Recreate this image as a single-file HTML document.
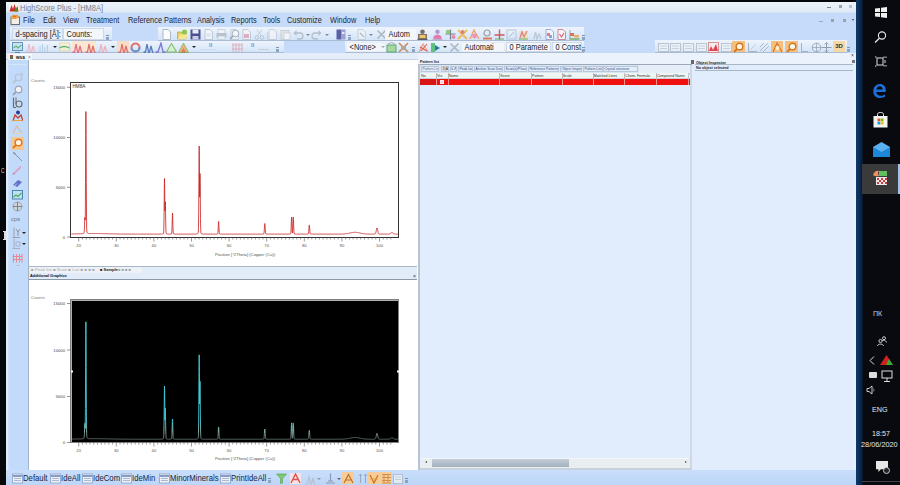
<!DOCTYPE html>
<html><head><meta charset="utf-8">
<style>
*{margin:0;padding:0;box-sizing:border-box}
html,body{width:900px;height:485px;overflow:hidden;background:#05070a;font-family:"Liberation Sans",sans-serif}
.a{position:absolute}
.t{position:absolute;white-space:nowrap;transform-origin:0 0}
.mn{position:absolute;top:16px;font-size:8.2px;color:#1b2636;transform:scaleX(.9);transform-origin:0 0;white-space:nowrap}
.tb{position:absolute;background:linear-gradient(#eef4fd,#d3e4f8);border-bottom:1px solid #a9bcd4}
.box{position:absolute;background:#f3f7fc;border:1px solid #cdd9e7;font-size:8.6px;color:#222;line-height:10px;white-space:nowrap;overflow:hidden}
.box span{display:inline-block;transform:scaleX(.86);transform-origin:0 0;padding-left:3px}
#wrap{position:absolute;left:0;top:0;width:900px;height:485px}
</style></head><body><div id="wrap">
<!-- window background -->
<div class="a" style="left:6px;top:2px;width:850px;height:483px;background:#c5dbf9"></div>
<!-- title bar -->
<div class="a" style="left:6px;top:2px;width:850px;height:11px;background:linear-gradient(#edf3fb,#e0eaf6);border-bottom:1px solid #d2e2f4"></div>
<svg class="a" style="left:9px;top:3px" width="10" height="9" viewBox="0 0 10 9"><rect x="0" y="0" width="10" height="9" fill="#f4f0ee"/><path d="M0.5 8.5 L2.5 2 L4 6 L5.5 1 L7 6 L8.5 3 L9.5 8.5Z" fill="#c83030"/><path d="M5 8.5 L7 4 L9.5 8.5Z" fill="#50902a"/></svg>
<div class="t" style="left:20px;top:3px;font-size:9px;line-height:11px;color:#76818f;transform:scaleX(.83)">HighScore Plus - [HM8A]</div>
<div class="a" style="left:827px;top:7px;width:4px;height:1px;background:#7c8796"></div>
<div class="a" style="left:839px;top:5px;width:3px;height:3px;background:#9aa4b0"></div>
<div class="a" style="left:849px;top:5px;width:3px;height:3px;background:#b8c2cc"></div>
<!-- menu bar -->
<svg class="a" style="left:10px;top:14px" width="10" height="11" viewBox="0 0 10 11"><rect x="1" y="3" width="8.5" height="7.5" fill="#f4efe6" stroke="#6a6050" stroke-width=".9"/><path d="M0.5 4 Q2 0 5 1 Q8 0 9 3 L6 5 L2 5Z" fill="#f0a040"/><path d="M3 2 L6 2.5" stroke="#c06020" stroke-width=".8"/></svg>
<div class="mn" style="left:23px">File</div><div class="mn" style="left:43px">Edit</div><div class="mn" style="left:63px">View</div>
<div class="mn" style="left:86px">Treatment</div><div class="mn" style="left:128px">Reference Patterns</div>
<div class="mn" style="left:197px">Analysis</div><div class="mn" style="left:231px">Reports</div><div class="mn" style="left:263px">Tools</div>
<div class="mn" style="left:287px">Customize</div><div class="mn" style="left:330px">Window</div><div class="mn" style="left:365px">Help</div>
<div class="a" style="left:819px;top:21px;width:4px;height:1px;background:#a0aab6"></div>
<div class="a" style="left:831px;top:19px;width:3px;height:3px;background:#98a2ae"></div>
<div class="a" style="left:843px;top:19px;width:3px;height:3px;background:#98a2ae"></div>
<div class="a" style="left:852px;top:19px;width:0;height:0;border-left:1.5px solid transparent;border-right:1.5px solid transparent;border-top:2px solid #445"></div>

<!-- toolbar row 1 -->
<div class="tb" style="left:10px;top:27px;width:102px;height:14px"></div>
<div class="box" style="left:12px;top:28px;width:51px;height:12px;background:#e6eef8"><span>d-spacing [Å]:</span></div>
<div class="box" style="left:63px;top:28px;width:41px;height:12px"><span>Counts:</span></div>
<div class="tb" style="left:158px;top:27px;width:426px;height:14px"></div>
<svg class="a" style="left:161px;top:29px" width="11" height="11" viewBox="0 0 11 11"><path d="M2 0.5 H7 L9.5 3 V10.5 H2Z" fill="#fdfdfd" stroke="#a8b2be" stroke-width="0.9"/></svg>
<svg class="a" style="left:177px;top:29px" width="11" height="11" viewBox="0 0 11 11"><path d="M0.5 3 H4 L5 4 H9 V10 H0.5Z" fill="#e8d060" stroke="#b09a30" stroke-width=".6"/><circle cx="7.5" cy="3" r="2.6" fill="#8cc850"/><path d="M1 10 L3 5.5 H10.5 L9 10Z" fill="#f4e890"/></svg>
<svg class="a" style="left:190px;top:29px" width="11" height="11" viewBox="0 0 11 11"><rect x="0.5" y="0.5" width="10" height="10" fill="#4a4f90"/><rect x="2.5" y="0.5" width="6" height="4" fill="#e8eaf6"/><rect x="2.5" y="7" width="6" height="3.5" fill="#c8cce6"/></svg>
<svg class="a" style="left:203px;top:29px;opacity:0.8" width="11" height="11" viewBox="0 0 11 11"><path d="M2 0.5 H7 L9.5 3 V10.5 H2Z" fill="#f6f8fa" stroke="#b0bac6" stroke-width="0.9"/><path d="M3.5 5 H8 M3.5 7 H8" stroke="#c0c8d0" stroke-width=".7"/></svg>
<svg class="a" style="left:216px;top:29px;opacity:0.7" width="11" height="11" viewBox="0 0 11 11"><rect x="2" y="0.5" width="7" height="4" fill="#f4f6f8" stroke="#b0b8c2" stroke-width=".7"/><rect x="0.5" y="4" width="10" height="4.5" fill="#a8b0ba"/><rect x="2" y="7" width="7" height="3.5" fill="#f0f2f4" stroke="#b0b8c2" stroke-width=".6"/></svg>
<svg class="a" style="left:229px;top:29px;opacity:0.7" width="11" height="11" viewBox="0 0 11 11"><path d="M2 0.5 H7 L9.5 3 V10.5 H2Z" fill="#f2f4f6" stroke="#b0bac6" stroke-width="0.9"/><circle cx="6.5" cy="4.5" r="3.3" fill="#ffffffaa" stroke="#8a96a4" stroke-width="1"/><path d="M4 7 L1 10" stroke="#8a96a4" stroke-width="1.8"/></svg>
<svg class="a" style="left:241px;top:29px;opacity:0.8" width="11" height="11" viewBox="0 0 11 11"><path d="M2 0.5 H7 L9.5 3 V10.5 H2Z" fill="#f4f4f6" stroke="#b4bcc6" stroke-width="0.9"/><rect x="3" y="5" width="5" height="4" fill="#e0a0b0"/></svg>
<svg class="a" style="left:254px;top:29px;opacity:0.7" width="11" height="11" viewBox="0 0 11 11"><circle cx="3" cy="8.5" r="1.8" fill="none" stroke="#a8b2be" stroke-width=".9"/><circle cx="8" cy="8.5" r="1.8" fill="none" stroke="#a8b2be" stroke-width=".9"/><path d="M3.5 7 L8 0.5 M7.5 7 L3 0.5" stroke="#b4bcc6" stroke-width=".9"/></svg>
<svg class="a" style="left:267px;top:29px;opacity:0.7" width="11" height="11" viewBox="0 0 11 11"><path d="M2 0.5 H7 L9.5 3 V10.5 H2Z" fill="#f4f6f8" stroke="#b8c0ca" stroke-width="0.9"/><path d="M0.5 3 V10.5 H6" fill="none" stroke="#b8c0ca" stroke-width=".8"/></svg>
<svg class="a" style="left:280px;top:29px;opacity:0.7" width="11" height="11" viewBox="0 0 11 11"><rect x="1" y="1.5" width="8" height="9" fill="#e4e0d4" stroke="#b8bcc4" stroke-width=".8"/><rect x="4" y="4" width="6" height="6.5" fill="#fafafa" stroke="#b8c0ca" stroke-width=".7"/></svg>
<svg class="a" style="left:293px;top:29px;opacity:0.8" width="11" height="11" viewBox="0 0 11 11"><path d="M2 4 H7 Q10 4 10 7 Q10 10 7 10 H4" fill="none" stroke="#aab4c0" stroke-width="1.3"/><path d="M0.5 4 L3.5 1 V7Z" fill="#aab4c0"/></svg>
<svg class="a" style="left:311px;top:29px;opacity:0.8" width="11" height="11" viewBox="0 0 11 11"><path d="M9 4 H4 Q1 4 1 7 Q1 10 4 10 H7" fill="none" stroke="#aab4c0" stroke-width="1.3"/><path d="M10.5 4 L7.5 1 V7Z" fill="#aab4c0"/></svg>
<svg class="a" style="left:336px;top:29px" width="11" height="11" viewBox="0 0 11 11"><rect x="0.5" y="0.5" width="5" height="10" fill="#5a60a8"/><rect x="5" y="0.5" width="4.5" height="10" fill="#9aa0d0"/><rect x="6" y="3" width="2.5" height="2" fill="#e8e8f8"/></svg>
<svg class="a" style="left:356px;top:29px;opacity:0.7" width="11" height="11" viewBox="0 0 11 11"><path d="M2 0.5 H7 L9.5 3 V10.5 H2Z" fill="#eef2f6" stroke="#b8c0ca" stroke-width="0.9"/><path d="M4 4 L8 8" stroke="#9ab0a0" stroke-width="1.2"/></svg>
<svg class="a" style="left:376px;top:29px;opacity:0.9" width="11" height="11" viewBox="0 0 11 11"><path d="M1.5 1.5 L9.5 9.5 M9.5 1.5 L1.5 9.5" stroke="#a8b0ba" stroke-width="1.5"/></svg>
<svg class="a" style="left:417px;top:29px;opacity:0.78" width="11" height="11" viewBox="0 0 11 11"><circle cx="5.5" cy="2.8" r="2.3" fill="#5a4a40"/><rect x="1" y="5" width="9" height="5.5" fill="#6a5040"/><rect x="2.5" y="6" width="6" height="3" fill="#f0c040"/><path d="M0.5 10.5 H10.5" stroke="#3a3a3a" stroke-width="1"/></svg>
<svg class="a" style="left:432px;top:29px;opacity:0.78" width="11" height="11" viewBox="0 0 11 11"><circle cx="5.5" cy="2.8" r="2.2" fill="#a080c0"/><path d="M1.5 10.5 V7.5 Q5.5 3.5 9.5 7.5 V10.5Z" fill="#e060a0"/><path d="M0.5 10.5 H10.5" stroke="#c0a0c0" stroke-width="1.2"/></svg>
<svg class="a" style="left:445px;top:29px;opacity:0.78" width="11" height="11" viewBox="0 0 11 11"><path d="M5.5 0.5 V10.5 M0.5 5 H10.5" stroke="#606060" stroke-width="1.2"/><circle cx="3" cy="3" r="2.2" fill="#70c060"/><circle cx="8.5" cy="8" r="2" fill="#e070a0"/></svg>
<svg class="a" style="left:457px;top:29px;opacity:0.78" width="11" height="11" viewBox="0 0 11 11"><path d="M1 1 L10 10 M10 1 L1 10" stroke="#f0b030" stroke-width="1.8"/><circle cx="5.5" cy="3" r="2" fill="#e06060"/></svg>
<svg class="a" style="left:469px;top:29px;opacity:0.78" width="11" height="11" viewBox="0 0 11 11"><path d="M1 10 L5 1 L10 10" fill="none" stroke="#f09050" stroke-width="1.4"/><circle cx="5.5" cy="7" r="2.4" fill="#f080a0"/></svg>
<svg class="a" style="left:482px;top:29px;opacity:0.78" width="11" height="11" viewBox="0 0 11 11"><circle cx="5" cy="4" r="3" fill="none" stroke="#888" stroke-width="1.2"/><path d="M1 9.5 H10" stroke="#e06030" stroke-width="2"/></svg>
<svg class="a" style="left:494px;top:29px;opacity:0.78" width="11" height="11" viewBox="0 0 11 11"><path d="M5.5 0.5 V10.5 M0.5 6 H10.5" stroke="#d03030" stroke-width="1.4"/><path d="M1 10 L10 10" stroke="#40a040" stroke-width="1"/></svg>
<svg class="a" style="left:506px;top:29px;opacity:0.8" width="11" height="11" viewBox="0 0 11 11"><rect x="1" y="1" width="9" height="9" fill="none" stroke="#b0bccc" stroke-width="1"/><path d="M3 8 L8 3" stroke="#a0b0c8" stroke-width="1"/></svg>
<svg class="a" style="left:518px;top:29px;opacity:0.78" width="11" height="11" viewBox="0 0 11 11"><rect x="1" y="2" width="9" height="8.5" fill="#f4e4a0"/><path d="M2 9 L4 3 L6 8 L9 2" fill="none" stroke="#e06080" stroke-width="1.3"/><path d="M1 10 H10" stroke="#60b050" stroke-width="1.2"/></svg>
<svg class="a" style="left:532px;top:29px;opacity:0.7" width="11" height="11" viewBox="0 0 11 11"><path d="M2 10 L3.5 3 L5 10 L7 5 L9 10" fill="none" stroke="#b0b8c4" stroke-width="1.2"/></svg>
<svg class="a" style="left:544px;top:29px;opacity:0.78" width="11" height="11" viewBox="0 0 11 11"><path d="M2 0.5 H7 L9.5 3 V10.5 H2Z" fill="#f4f6fc" stroke="#8890c8" stroke-width="0.9"/><rect x="3" y="4" width="3" height="3" fill="#e06060"/><rect x="5" y="6" width="3" height="3" fill="#7090d0"/></svg>
<svg class="a" style="left:556px;top:29px;opacity:0.78" width="11" height="11" viewBox="0 0 11 11"><path d="M2 0.5 H7 L9.5 3 V10.5 H2Z" fill="#fcf4f6" stroke="#c06070" stroke-width="0.9"/><path d="M3.5 5 L5.5 8 L8 4" fill="none" stroke="#d04050" stroke-width="1.2"/></svg>
<svg class="a" style="left:569px;top:29px;opacity:0.78" width="11" height="11" viewBox="0 0 11 11"><rect x="1" y="4" width="4" height="3" fill="#e05030"/><rect x="5" y="6" width="5" height="2.5" fill="#f0a040"/><path d="M0.5 10 H10.5" stroke="#60a040" stroke-width="1.5"/><path d="M1 1 V10" stroke="#777" stroke-width=".8"/></svg>
<div class="a" style="left:306px;top:34px;width:0;height:0;border-left:2px solid transparent;border-right:2px solid transparent;border-top:2px solid #7a8796"></div>
<div class="a" style="left:325px;top:34px;width:0;height:0;border-left:2px solid transparent;border-right:2px solid transparent;border-top:2px solid #7a8796"></div>
<div class="a" style="left:369px;top:34px;width:0;height:0;border-left:2px solid transparent;border-right:2px solid transparent;border-top:2px solid #7a8796"></div>
<div class="a" style="left:106px;top:35px;width:3px;height:1px;background:#7d93ae;"></div><div class="a" style="left:106px;top:37px;width:3px;height:3px;background:#8ea5c2;"></div>
<div class="a" style="left:348px;top:35px;width:3px;height:1px;background:#7d93ae;"></div><div class="a" style="left:348px;top:37px;width:3px;height:3px;background:#8ea5c2;"></div>
<div class="a" style="left:582px;top:35px;width:3px;height:1px;background:#7d93ae;"></div><div class="a" style="left:582px;top:37px;width:3px;height:3px;background:#8ea5c2;"></div>
<div class="box" style="left:385px;top:28px;width:32px;height:12px;border-color:#eef3f9"><span>Autom</span></div>
<div class="tb" style="left:10px;top:41px;width:274px;height:12px"></div>
<svg class="a" style="left:12px;top:42px;opacity:0.75" width="11" height="11" viewBox="0 0 11 11"><rect x="0.5" y="0.5" width="10" height="8" fill="#bfe0f0" stroke="#3a78a8" stroke-width="1"/><path d="M1.5 6 L4 4 L6 6 L9.5 3" fill="none" stroke="#40a050" stroke-width="1.2"/><path d="M3 10.5 H8" stroke="#3a78a8" stroke-width="1.2"/></svg>
<svg class="a" style="left:25px;top:42px;opacity:0.9" width="11" height="11" viewBox="0 0 11 11"><path d="M0.5 10 L2.5 10 L4 2 L5.5 10 L6.5 10 L8 4 L9.5 10 L10.5 10" fill="none" stroke="#f4b0c4" stroke-width="1.1"/></svg>
<svg class="a" style="left:38px;top:42px;opacity:0.75" width="11" height="11" viewBox="0 0 11 11"><path d="M2 10 V4 M4.5 10 V2 M7 10 V5 M9.5 10 V3" stroke="#a8c4e4" stroke-width="1"/></svg>
<div class="a" style="left:53px;top:46px;width:0;height:0;border-left:2px solid transparent;border-right:2px solid transparent;border-top:2px solid #222"></div>
<svg class="a" style="left:59px;top:42px;opacity:0.75" width="11" height="11" viewBox="0 0 11 11"><rect x="0.5" y="1" width="10" height="8" fill="#f8f0c8" stroke="#e0c860" stroke-width=".6"/><path d="M0.5 6 Q5 3 10.5 6" fill="none" stroke="#40a050" stroke-width="1.4"/></svg>
<div class="a" style="left:72px;top:41px;width:12px;height:11px;background:#fbe6d2;"></div>
<svg class="a" style="left:72px;top:42px;opacity:0.75" width="11" height="11" viewBox="0 0 11 11"><path d="M0.5 10 L2.5 10 L4 2 L5.5 10 L6.5 10 L8 4 L9.5 10 L10.5 10" fill="none" stroke="#e04870" stroke-width="1.3"/></svg>
<div class="a" style="left:84px;top:41px;width:12px;height:11px;background:#fbe6d2;"></div>
<svg class="a" style="left:85px;top:42px;opacity:0.75" width="11" height="11" viewBox="0 0 11 11"><path d="M0.5 10 L2.5 10 L4 2 L5.5 10 L6.5 10 L8 4 L9.5 10 L10.5 10" fill="none" stroke="#d84848" stroke-width="1.3"/></svg>
<svg class="a" style="left:97px;top:42px;opacity:0.75" width="11" height="11" viewBox="0 0 11 11"><path d="M0.5 10 L2.5 10 L4 2 L5.5 10 L6.5 10 L8 4 L9.5 10 L10.5 10" fill="none" stroke="#f0a0a8" stroke-width="1.2"/></svg>
<div class="a" style="left:111px;top:46px;width:0;height:0;border-left:2px solid transparent;border-right:2px solid transparent;border-top:2px solid #222"></div>
<div class="a" style="left:117px;top:41px;width:12px;height:11px;background:#f9dcc4;"></div>
<svg class="a" style="left:118px;top:42px;opacity:0.75" width="11" height="11" viewBox="0 0 11 11"><path d="M0.5 10 L2.5 10 L4 2 L5.5 10 L6.5 10 L8 4 L9.5 10 L10.5 10" fill="none" stroke="#d85050" stroke-width="1.3"/></svg>
<svg class="a" style="left:130px;top:42px;opacity:0.75" width="11" height="11" viewBox="0 0 11 11"><circle cx="5.5" cy="5.5" r="4" fill="none" stroke="#e04848" stroke-width="2"/><path d="M1.5 5.5 A4 4 0 0 0 9.5 5.5" fill="none" stroke="#3a80c0" stroke-width="2"/></svg>
<svg class="a" style="left:143px;top:42px;opacity:0.75" width="11" height="11" viewBox="0 0 11 11"><path d="M0.5 10 L2.5 10 L4 2 L5.5 10 L6.5 10 L8 4 L9.5 10 L10.5 10" fill="none" stroke="#2a5ab0" stroke-width="1.3"/></svg>
<svg class="a" style="left:155px;top:42px;opacity:0.75" width="11" height="11" viewBox="0 0 11 11"><path d="M0.5 10 L3 10 L6 1 L8 10 L10.5 10" fill="none" stroke="#5a50c0" stroke-width="1.3"/></svg>
<svg class="a" style="left:166px;top:42px;opacity:0.75" width="11" height="11" viewBox="0 0 11 11"><path d="M0.5 10 L5.5 1.5 L10.5 10Z" fill="#d8f0c0" stroke="#60b040" stroke-width="1.1"/></svg>
<svg class="a" style="left:178px;top:42px;opacity:0.75" width="11" height="11" viewBox="0 0 11 11"><path d="M0.5 10.5 L5.5 1 L10.5 10.5Z" fill="#f0a050" stroke="#60a040" stroke-width=".8"/><path d="M3 10.5 L5.5 6 L8 10.5Z" fill="#d06020"/></svg>
<div class="a" style="left:192px;top:46px;width:0;height:0;border-left:2px solid transparent;border-right:2px solid transparent;border-top:2px solid #222"></div>
<div class="t" style="left:209px;top:42px;font-size:6px;color:#667">II</div>
<div class="t" style="left:200px;top:45px;font-size:6px;color:#8a96a6;letter-spacing:1px">......</div>
<svg class="a" style="left:232px;top:42px;opacity:0.9" width="11" height="11" viewBox="0 0 11 11"><path d="M1 1 V10 M4 1 V10 M7 1 V10 M10 1 V10 M0.5 3 H10.5 M0.5 7 H10.5" stroke="#e0a0b0" stroke-width=".9"/></svg>
<div class="t" style="left:251px;top:42px;font-size:6px;color:#667">II</div>
<div class="t" style="left:258px;top:45px;font-size:6px;color:#556;letter-spacing:.5px">.....</div>
<div class="a" style="left:276px;top:47px;width:3px;height:1px;background:#7d93ae;"></div><div class="a" style="left:276px;top:49px;width:3px;height:3px;background:#8ea5c2;"></div>
<div class="tb" style="left:345px;top:41px;width:239px;height:12px"></div>
<div class="box" style="left:346px;top:42px;width:40px;height:10px;line-height:9px;border-color:#e6edf6"><span>&lt;None&gt;</span></div>
<div class="a" style="left:381px;top:46px;width:0;height:0;border-left:2px solid transparent;border-right:2px solid transparent;border-top:2px solid #aaa"></div>
<svg class="a" style="left:386px;top:42px" width="11" height="11" viewBox="0 0 11 11"><rect x="1" y="3" width="9" height="7" fill="#a8d8a0" stroke="#40a060" stroke-width=".8"/><path d="M2 2 Q5.5 -1 9 2" fill="none" stroke="#a0a8b0" stroke-width="1"/></svg>
<svg class="a" style="left:398px;top:42px;opacity:0.9" width="11" height="11" viewBox="0 0 11 11"><path d="M1 1 L10 10 M10 1 L1 10" stroke="#d08040" stroke-width="1.6"/><rect x="3" y="4" width="5" height="4" fill="#b0a090"/></svg>
<div class="a" style="left:412px;top:47px;width:3px;height:1px;background:#7d93ae;"></div><div class="a" style="left:412px;top:49px;width:3px;height:3px;background:#8ea5c2;"></div>
<svg class="a" style="left:418px;top:42px" width="11" height="11" viewBox="0 0 11 11"><path d="M1 10 L5 2 L10 10" fill="none" stroke="#f0a090" stroke-width="1.3"/><path d="M2 5 L9 9 M9 2 L3 9" stroke="#e06040" stroke-width="1.1"/></svg>
<svg class="a" style="left:430px;top:42px" width="11" height="11" viewBox="0 0 11 11"><rect x="1" y="1" width="4" height="9" fill="#60c080"/><path d="M5 3 L10 6 L5 9Z" fill="#2080a0"/></svg>
<div class="a" style="left:443px;top:46px;width:0;height:0;border-left:2px solid transparent;border-right:2px solid transparent;border-top:2px solid #222"></div>
<svg class="a" style="left:449px;top:42px" width="11" height="11" viewBox="0 0 11 11"><path d="M1.5 1.5 L9.5 9.5 M9.5 1.5 L1.5 9.5" stroke="#aeb6c0" stroke-width="1.6"/></svg>
<div class="box" style="left:461px;top:42px;width:44px;height:10px;line-height:9px;border-color:#e9eef5"><span>Automati</span></div>
<div class="box" style="left:506px;top:42px;width:45px;height:10px;line-height:9px"><span>0 Paramete</span></div>
<div class="box" style="left:552px;top:42px;width:30px;height:10px;line-height:9px"><span>0 Constr</span></div>
<div class="a" style="left:582px;top:47px;width:3px;height:1px;background:#7d93ae;"></div><div class="a" style="left:582px;top:49px;width:3px;height:3px;background:#8ea5c2;"></div>
<div class="tb" style="left:655px;top:40px;width:192px;height:13px"></div>
<svg class="a" style="left:658px;top:42px;opacity:0.75" width="11" height="11" viewBox="0 0 11 11"><rect x="0.5" y="1.5" width="10" height="8" fill="#eef2f6" stroke="#a8b2bc" stroke-width=".9"/><path d="M2 4 H9 M2 6.5 H9" stroke="#b8c0ca" stroke-width=".8"/></svg>
<svg class="a" style="left:670px;top:42px;opacity:0.75" width="11" height="11" viewBox="0 0 11 11"><rect x="0.5" y="1.5" width="10" height="8" fill="#eef2f6" stroke="#a8b2bc" stroke-width=".9"/><path d="M2 4 H9 M2 6.5 H9" stroke="#b8c0ca" stroke-width=".8"/></svg>
<svg class="a" style="left:683px;top:42px;opacity:0.75" width="11" height="11" viewBox="0 0 11 11"><rect x="0.5" y="1.5" width="10" height="8" fill="#eef2f6" stroke="#a8b2bc" stroke-width=".9"/><path d="M2 4 H9 M2 6.5 H9" stroke="#b8c0ca" stroke-width=".8"/></svg>
<svg class="a" style="left:696px;top:42px;opacity:0.75" width="11" height="11" viewBox="0 0 11 11"><rect x="0.5" y="1.5" width="10" height="8" fill="#eef2f6" stroke="#a8b2bc" stroke-width=".9"/><path d="M2 4 H9 M2 6.5 H9" stroke="#b8c0ca" stroke-width=".8"/></svg>
<svg class="a" style="left:721px;top:42px;opacity:0.75" width="11" height="11" viewBox="0 0 11 11"><rect x="0.5" y="1.5" width="10" height="8" fill="#eef2f6" stroke="#a8b2bc" stroke-width=".9"/><path d="M2 4 H9 M2 6.5 H9" stroke="#b8c0ca" stroke-width=".8"/></svg>
<svg class="a" style="left:708px;top:42px" width="11" height="11" viewBox="0 0 11 11"><rect x="0.5" y="0.5" width="10" height="10" fill="#f8ecec" stroke="#d08080" stroke-width=".8"/><path d="M1 9 L3 4 L5 8 L8 2 L10 9" fill="#e04050"/></svg>
<div class="a" style="left:732px;top:41px;width:13px;height:11px;background:#f4c080;"></div>
<svg class="a" style="left:733px;top:42px" width="11" height="11" viewBox="0 0 11 11"><circle cx="6.5" cy="4.5" r="3.3" fill="#f8f8e8" stroke="#d07820" stroke-width="1.4"/><path d="M4 7 L1 10" stroke="#d07820" stroke-width="1.8"/></svg>
<div class="a" style="left:771px;top:41px;width:12px;height:11px;background:#f4c080;"></div>
<svg class="a" style="left:772px;top:42px" width="11" height="11" viewBox="0 0 11 11"><path d="M1 10 L5 1 L10 10" fill="none" stroke="#e07020" stroke-width="1.2"/><circle cx="5.5" cy="6" r="2" fill="#fff4d0"/></svg>
<div class="a" style="left:785px;top:41px;width:13px;height:11px;background:#f4c080;"></div>
<svg class="a" style="left:786px;top:42px" width="11" height="11" viewBox="0 0 11 11"><circle cx="6.5" cy="4.5" r="3.3" fill="#f8f8e8" stroke="#d07820" stroke-width="1.4"/><path d="M4 7 L1 10" stroke="#d07820" stroke-width="1.8"/></svg>
<svg class="a" style="left:811px;top:42px" width="11" height="11" viewBox="0 0 11 11"><circle cx="5.5" cy="5.5" r="4.3" fill="none" stroke="#9aa6b2" stroke-width=".9"/><path d="M1 5.5 H10 M5.5 1 V10" stroke="#9aa6b2" stroke-width=".8"/></svg>
<svg class="a" style="left:821px;top:42px;opacity:0.9" width="11" height="11" viewBox="0 0 11 11"><path d="M5.5 0.5 V10.5 M0.5 5.5 H10.5" stroke="#8a96a4" stroke-width="1"/><path d="M3.5 2.5 L5.5 0.5 L7.5 2.5 M3.5 8.5 L5.5 10.5 L7.5 8.5" fill="none" stroke="#8a96a4" stroke-width=".8"/></svg>
<svg class="a" style="left:747px;top:42px" width="11" height="11" viewBox="0 0 11 11"><path d="M1.5 1 V9.5 H10" fill="none" stroke="#a8b2bc" stroke-width="1"/><path d="M3 8 L9 2" stroke="#c0c8d2" stroke-width=".8"/></svg>
<svg class="a" style="left:759px;top:42px" width="11" height="11" viewBox="0 0 11 11"><path d="M1 9 L9 1 M4 10 L10 4 M1 5 L5 1" stroke="#a8b2bc" stroke-width=".9"/></svg>
<svg class="a" style="left:800px;top:42px" width="11" height="11" viewBox="0 0 11 11"><path d="M1.5 1 V9.5 H8" fill="none" stroke="#a8b2bc" stroke-width="1"/></svg>
<div class="a" style="left:833px;top:41px;width:12px;height:11px;background:#f6d8a4;font-size:6px;font-weight:bold;color:#333;text-align:center;line-height:11px">3D</div>
<div class="a" style="left:847px;top:47px;width:3px;height:1px;background:#7d93ae;"></div><div class="a" style="left:847px;top:49px;width:3px;height:3px;background:#8ea5c2;"></div>

<!-- tab strip -->
<div class="a" style="left:6px;top:53px;width:412px;height:7px;background:#e4edf9;border-bottom:1px solid #c6d3e3"></div>
<div class="a" style="left:8px;top:54px;width:24px;height:7px;background:#eef4fc;border-top:1px solid #fff"></div>
<div class="a" style="left:10px;top:55px;width:3px;height:4px;background:linear-gradient(#d04040,#308040)"></div>
<div class="t" style="left:16px;top:54px;font-size:4.6px;line-height:7px;color:#111;font-weight:bold">wsa</div>
<div class="t" style="left:28px;top:54px;font-size:4.6px;line-height:7px;color:#888">×</div>

<!-- left toolbar -->
<div class="a" style="left:6px;top:60px;width:22px;height:410px;background:linear-gradient(90deg,#dbe9fb,#c3dbfa 20%,#c3dbfa)"></div>
<div class="a" style="left:28px;top:60px;width:1px;height:410px;background:#a4b4c6"></div>
<div class="a" style="left:6px;top:60px;width:2px;height:410px;background:#e0ecfa;"></div>
<div class="a" style="left:9px;top:64px;width:17px;height:1px;background:#d6e4f6;"></div>
<svg class="a" style="left:12px;top:73px;opacity:0.8" width="11" height="11" viewBox="0 0 11 11"><circle cx="6.5" cy="4.5" r="3.3" fill="none" stroke="#b4bec8" stroke-width="1.1"/><path d="M4 7 L1 10" stroke="#b4bec8" stroke-width="1.8"/><path d="M8 0.5 H10.5 V3" fill="none" stroke="#b4bec8" stroke-width=".8"/></svg>
<svg class="a" style="left:12px;top:85px" width="11" height="11" viewBox="0 0 11 11"><circle cx="6.5" cy="4.5" r="3.3" fill="#f0f4f8" stroke="#98a4b2" stroke-width="1.2"/><path d="M4 7 L1 10" stroke="#98a4b2" stroke-width="1.8"/></svg>
<svg class="a" style="left:12px;top:97px" width="11" height="11" viewBox="0 0 11 11"><path d="M1.5 0.5 V10.5 M1.5 10.5 H4" stroke="#666c76" stroke-width="1.2"/><circle cx="7" cy="7" r="3" fill="none" stroke="#6a6a6a" stroke-width="1.1"/><path d="M4 0.5 V7" stroke="#6a6a6a" stroke-width="1"/></svg>
<svg class="a" style="left:12px;top:110px" width="11" height="12" viewBox="0 0 11 12"><circle cx="6" cy="2.5" r="2" fill="#303a90"/><path d="M1 11 L3 5 L6 8 L9 5 L11 11" fill="none" stroke="#c04030" stroke-width="1.3"/><path d="M0.5 10.5 H10.5" stroke="#e8a040" stroke-width="1"/></svg>
<svg class="a" style="left:12px;top:123px;opacity:0.8" width="11" height="11" viewBox="0 0 11 11"><path d="M1 10 L5 3 L10 10" fill="none" stroke="#e8b090" stroke-width="1.2"/><path d="M2 10.5 H9" stroke="#f0d080" stroke-width="1"/></svg>
<div class="a" style="left:11px;top:137px;width:13px;height:13px;background:#f6c890;"></div>
<svg class="a" style="left:12px;top:138px" width="11" height="11" viewBox="0 0 11 11"><circle cx="6.5" cy="4.5" r="3.3" fill="#fff8e8" stroke="#e07820" stroke-width="1.5"/><path d="M4 7 L1 10" stroke="#e07820" stroke-width="1.8"/></svg>
<svg class="a" style="left:12px;top:151px" width="11" height="11" viewBox="0 0 11 11"><path d="M1 1 L10 10" stroke="#8a94a2" stroke-width="1"/><path d="M1 1 L4 2 L2 4Z" fill="#8a94a2"/></svg>
<svg class="a" style="left:12px;top:164px" width="11" height="11" viewBox="0 0 11 11"><path d="M1.5 10 L9 2.5" stroke="#d8a8d0" stroke-width="2.2"/><path d="M1 10.5 L2.5 9" stroke="#8a6a8a" stroke-width="1"/></svg>
<svg class="a" style="left:12px;top:177px" width="11" height="11" viewBox="0 0 11 11"><path d="M1 8 L6 3 L10 5 L5 10Z" fill="#6070c8"/><path d="M2 9.5 L5 6.5" stroke="#c0c8f0" stroke-width="1"/></svg>
<svg class="a" style="left:12px;top:190px" width="11" height="11" viewBox="0 0 11 11"><rect x="0.5" y="0.5" width="10" height="8.5" fill="#bfe0ec" stroke="#4a86b0" stroke-width="1"/><path d="M1.5 7 L4 5 L6 6.5 L9.5 3" fill="none" stroke="#50a860" stroke-width="1.2"/></svg>
<svg class="a" style="left:12px;top:201px" width="11" height="11" viewBox="0 0 11 11"><circle cx="5.5" cy="5.5" r="4.5" fill="#cdd3da" stroke="#98a2ae" stroke-width="1"/><path d="M1 5.5 H10 M5.5 1 V10" stroke="#7a8694" stroke-width="1"/></svg>
<div class="t" style="left:11px;top:216px;font-size:6px;color:#6a7a90">cps</div>
<svg class="a" style="left:12px;top:227px" width="11" height="11" viewBox="0 0 11 11"><path d="M2 0.5 V10.5 M0.5 10.5 H8" stroke="#9aa0a8" stroke-width="1"/><path d="M4 2 L6 5 L8 2 M6 5 V9" fill="none" stroke="#8a8a8a" stroke-width=".9"/></svg>
<svg class="a" style="left:12px;top:238px" width="11" height="11" viewBox="0 0 11 11"><path d="M2 0.5 V10.5 M0.5 10.5 H8" stroke="#a8aeb6" stroke-width="1"/><rect x="4" y="4" width="4" height="4" fill="none" stroke="#a8a8c8" stroke-width=".8"/></svg>
<div class="a" style="left:22px;top:232px;width:0;height:0;border-left:2px solid transparent;border-right:2px solid transparent;border-top:2px solid #222"></div>
<div class="a" style="left:22px;top:243px;width:0;height:0;border-left:2px solid transparent;border-right:2px solid transparent;border-top:2px solid #222"></div>
<svg class="a" style="left:12px;top:253px" width="11" height="10" viewBox="0 0 11 10"><path d="M1.5 1 V9.5 M4.5 1 V9.5 M7.5 1 V9.5 M10 1 V9.5 M0.5 3.5 H10.5 M0.5 6.5 H10.5" stroke="#e58a96" stroke-width="1"/></svg>
<div class="t" style="left:16px;top:261px;font-size:6px;color:#445">..</div>
<div class="t" style="left:1px;top:166px;font-size:8px;color:#ddd;transform:scaleX(.6)">C</div>
<div class="a" style="left:4px;top:231px;width:2px;height:9px;background:#ddd;"></div>
<div class="a" style="left:3px;top:231px;width:3px;height:1px;background:#ddd;"></div>
<div class="a" style="left:3px;top:239px;width:3px;height:1px;background:#ddd;"></div>
<!-- main white -->
<div class="a" style="left:29px;top:60px;width:389px;height:410px;background:#fff"></div>
<svg class="a" style="left:0;top:0" width="900" height="485" viewBox="0 0 900 485">
<rect x="70.5" y="82.5" width="328" height="155" fill="none" stroke="#333" stroke-width="1"/>
<path d="M71.50,233.96 L71.70,233.95 L71.90,233.95 L72.10,233.95 L72.30,233.94 L72.50,233.94 L72.70,233.94 L72.90,233.93 L73.10,233.93 L73.30,233.92 L73.50,233.92 L73.70,233.92 L73.90,233.91 L74.10,233.91 L74.30,233.90 L74.50,233.90 L74.70,233.90 L74.90,233.89 L75.10,233.89 L75.30,233.88 L75.50,233.88 L75.70,233.87 L75.90,233.87 L76.10,233.86 L76.30,233.86 L76.50,233.85 L76.70,233.85 L76.90,233.84 L77.10,233.84 L77.30,233.84 L77.50,233.83 L77.70,233.83 L77.90,233.82 L78.10,233.82 L78.30,233.81 L78.50,233.81 L78.70,233.80 L78.90,233.80 L79.10,233.79 L79.30,233.79 L79.50,233.78 L79.70,233.78 L79.90,233.77 L80.10,233.77 L80.30,233.76 L80.50,233.75 L80.70,233.75 L80.90,233.74 L81.10,233.74 L81.30,233.73 L81.50,233.72 L81.70,233.72 L81.90,233.71 L82.10,233.70 L82.30,233.68 L82.50,233.66 L82.70,233.64 L82.90,233.60 L83.10,233.56 L83.30,233.50 L83.50,233.43 L83.70,233.35 L83.90,233.25 L84.10,232.66 L84.30,230.43 L84.50,225.82 L84.70,220.19 L84.75,219.07 L84.90,217.50 L85.05,219.07 L85.10,220.18 L85.30,216.01 L85.50,182.66 L85.70,135.60 L85.75,125.73 L85.90,111.54 L86.05,125.72 L86.10,135.59 L86.30,182.64 L86.50,215.99 L86.70,228.97 L86.90,232.07 L87.10,232.63 L87.30,232.80 L87.50,232.93 L87.70,233.05 L87.90,233.16 L88.10,233.25 L88.30,233.33 L88.50,233.39 L88.70,233.44 L88.90,233.47 L89.10,233.50 L89.30,233.52 L89.50,233.53 L89.70,233.53 L89.90,233.54 L90.10,233.54 L90.30,233.54 L90.50,233.54 L90.70,233.54 L90.90,233.53 L91.10,233.53 L91.30,233.53 L91.50,233.53 L91.70,233.53 L91.90,233.52 L92.10,233.52 L92.30,233.52 L92.50,233.52 L92.70,233.52 L92.90,233.52 L93.10,233.52 L93.30,233.51 L93.50,233.51 L93.70,233.51 L93.90,233.51 L94.10,233.51 L94.30,233.51 L94.50,233.51 L94.70,233.51 L94.90,233.51 L95.10,233.51 L95.30,233.51 L95.50,233.51 L95.70,233.51 L95.90,233.51 L96.10,233.51 L96.30,233.51 L96.50,233.51 L96.70,233.51 L96.90,233.52 L97.10,233.52 L97.30,233.52 L97.50,233.52 L97.70,233.52 L97.90,233.52 L98.10,233.52 L98.30,233.53 L98.50,233.53 L98.70,233.53 L98.90,233.53 L99.10,233.54 L99.30,233.54 L99.50,233.54 L99.70,233.54 L99.90,233.55 L100.10,233.55 L100.30,233.55 L100.50,233.55 L100.70,233.56 L100.90,233.56 L101.10,233.56 L101.30,233.57 L101.50,233.57 L101.70,233.57 L101.90,233.58 L102.10,233.58 L102.30,233.59 L102.50,233.59 L102.70,233.59 L102.90,233.60 L103.10,233.60 L103.30,233.61 L103.50,233.61 L103.70,233.61 L103.90,233.62 L104.10,233.62 L104.30,233.63 L104.50,233.63 L104.70,233.64 L104.90,233.64 L105.10,233.65 L105.30,233.65 L105.50,233.65 L105.70,233.66 L105.90,233.66 L106.10,233.67 L106.30,233.67 L106.50,233.68 L106.70,233.68 L106.90,233.69 L107.10,233.69 L107.30,233.70 L107.50,233.70 L107.70,233.71 L107.90,233.71 L108.10,233.72 L108.30,233.72 L108.50,233.73 L108.70,233.73 L108.90,233.74 L109.10,233.74 L109.30,233.75 L109.50,233.76 L109.70,233.76 L109.90,233.77 L110.10,233.77 L110.30,233.78 L110.50,233.78 L110.70,233.79 L110.90,233.79 L111.10,233.80 L111.30,233.80 L111.50,233.81 L111.70,233.81 L111.90,233.82 L112.10,233.82 L112.30,233.83 L112.50,233.83 L112.70,233.84 L112.90,233.84 L113.10,233.84 L113.30,233.85 L113.50,233.85 L113.70,233.86 L113.90,233.86 L114.10,233.87 L114.30,233.87 L114.50,233.88 L114.70,233.88 L114.90,233.89 L115.10,233.89 L115.30,233.90 L115.50,233.90 L115.70,233.90 L115.90,233.91 L116.10,233.91 L116.30,233.92 L116.50,233.92 L116.70,233.92 L116.90,233.93 L117.10,233.93 L117.30,233.94 L117.50,233.94 L117.70,233.94 L117.90,233.95 L118.10,233.95 L118.30,233.95 L118.50,233.96 L118.70,233.96 L118.90,233.97 L119.10,233.97 L119.30,233.97 L119.50,233.98 L119.70,233.98 L119.90,233.98 L120.10,233.98 L120.30,233.99 L120.50,233.99 L120.70,233.99 L120.90,234.00 L121.10,234.00 L121.30,234.00 L121.50,234.01 L121.70,234.01 L121.90,234.01 L122.10,234.01 L122.30,234.02 L122.50,234.02 L122.70,234.02 L122.90,234.02 L123.10,234.03 L123.30,234.03 L123.50,234.03 L123.70,234.03 L123.90,234.03 L124.10,234.04 L124.30,234.04 L124.50,234.04 L124.70,234.04 L124.90,234.04 L125.10,234.05 L125.30,234.05 L125.50,234.05 L125.70,234.05 L125.90,234.05 L126.10,234.06 L126.30,234.06 L126.50,234.06 L126.70,234.06 L126.90,234.06 L127.10,234.06 L127.30,234.06 L127.50,234.07 L127.70,234.07 L127.90,234.07 L128.10,234.07 L128.30,234.07 L128.50,234.07 L128.70,234.07 L128.90,234.07 L129.10,234.08 L129.30,234.08 L129.50,234.08 L129.70,234.08 L129.90,234.08 L130.10,234.08 L130.30,234.08 L130.50,234.08 L130.70,234.08 L130.90,234.08 L131.10,234.09 L131.30,234.09 L131.50,234.09 L131.70,234.09 L131.90,234.09 L132.10,234.09 L132.30,234.09 L132.50,234.09 L132.70,234.09 L132.90,234.09 L133.10,234.09 L133.30,234.09 L133.50,234.09 L133.70,234.09 L133.90,234.10 L134.10,234.10 L134.30,234.10 L134.50,234.10 L134.70,234.10 L134.90,234.10 L135.10,234.10 L135.30,234.10 L135.50,234.10 L135.70,234.10 L135.90,234.10 L136.10,234.10 L136.30,234.10 L136.50,234.10 L136.70,234.10 L136.90,234.10 L137.10,234.10 L137.30,234.10 L137.50,234.10 L137.70,234.10 L137.90,234.10 L138.10,234.10 L138.30,234.10 L138.50,234.10 L138.70,234.10 L138.90,234.10 L139.10,234.10 L139.30,234.10 L139.50,234.10 L139.70,234.10 L139.90,234.10 L140.10,234.10 L140.30,234.11 L140.50,234.11 L140.70,234.11 L140.90,234.11 L141.10,234.11 L141.30,234.11 L141.50,234.11 L141.70,234.11 L141.90,234.11 L142.10,234.11 L142.30,234.11 L142.50,234.11 L142.70,234.11 L142.90,234.11 L143.10,234.11 L143.30,234.11 L143.50,234.11 L143.70,234.11 L143.90,234.11 L144.10,234.11 L144.30,234.11 L144.50,234.11 L144.70,234.11 L144.90,234.11 L145.10,234.11 L145.30,234.11 L145.50,234.11 L145.70,234.11 L145.90,234.11 L146.10,234.11 L146.30,234.11 L146.50,234.11 L146.70,234.11 L146.90,234.11 L147.10,234.11 L147.30,234.11 L147.50,234.11 L147.70,234.11 L147.90,234.11 L148.10,234.11 L148.30,234.11 L148.50,234.11 L148.70,234.11 L148.90,234.11 L149.10,234.11 L149.30,234.11 L149.50,234.11 L149.70,234.11 L149.90,234.11 L150.10,234.11 L150.30,234.11 L150.50,234.11 L150.70,234.11 L150.90,234.11 L151.10,234.11 L151.30,234.11 L151.50,234.11 L151.70,234.11 L151.90,234.11 L152.10,234.11 L152.30,234.11 L152.50,234.11 L152.70,234.11 L152.90,234.11 L153.10,234.11 L153.30,234.11 L153.50,234.11 L153.70,234.11 L153.90,234.11 L154.10,234.11 L154.30,234.11 L154.50,234.11 L154.70,234.11 L154.90,234.11 L155.10,234.11 L155.30,234.11 L155.50,234.11 L155.70,234.11 L155.90,234.11 L156.10,234.11 L156.30,234.11 L156.50,234.11 L156.70,234.11 L156.90,234.11 L157.10,234.11 L157.30,234.11 L157.50,234.11 L157.70,234.11 L157.90,234.11 L158.10,234.11 L158.30,234.11 L158.50,234.11 L158.70,234.11 L158.90,234.11 L159.10,234.11 L159.30,234.11 L159.50,234.11 L159.70,234.11 L159.90,234.11 L160.10,234.11 L160.30,234.11 L160.50,234.10 L160.70,234.10 L160.90,234.10 L161.10,234.09 L161.30,234.08 L161.50,234.07 L161.70,234.05 L161.90,234.03 L162.10,234.00 L162.30,233.96 L162.50,233.92 L162.70,233.87 L162.90,233.81 L163.10,233.75 L163.30,233.67 L163.50,233.41 L163.70,232.00 L163.90,226.08 L164.10,210.90 L164.30,189.47 L164.35,184.97 L164.50,178.51 L164.65,184.97 L164.70,189.47 L164.90,210.90 L165.10,208.18 L165.15,205.57 L165.30,201.82 L165.45,205.57 L165.50,208.18 L165.70,220.63 L165.90,229.45 L166.10,232.88 L166.30,233.70 L166.50,233.85 L166.70,233.90 L166.90,233.93 L167.10,233.97 L167.30,234.00 L167.50,234.02 L167.70,234.04 L167.90,234.06 L168.10,234.07 L168.30,234.08 L168.50,234.09 L168.70,234.10 L168.90,234.10 L169.10,234.10 L169.30,234.10 L169.50,234.09 L169.70,234.09 L169.90,234.08 L170.10,234.07 L170.30,234.05 L170.50,234.04 L170.70,234.02 L170.90,234.00 L171.10,233.97 L171.30,233.94 L171.50,233.84 L171.70,233.31 L171.90,231.06 L172.10,225.30 L172.30,217.18 L172.35,215.47 L172.50,213.02 L172.65,215.47 L172.70,217.18 L172.90,225.30 L173.10,231.06 L173.30,233.31 L173.50,233.84 L173.70,233.94 L173.90,233.97 L174.10,234.00 L174.30,234.02 L174.50,234.04 L174.70,234.05 L174.90,234.07 L175.10,234.08 L175.30,234.09 L175.50,234.09 L175.70,234.10 L175.90,234.10 L176.10,234.10 L176.30,234.11 L176.50,234.11 L176.70,234.11 L176.90,234.11 L177.10,234.11 L177.30,234.11 L177.50,234.11 L177.70,234.11 L177.90,234.11 L178.10,234.11 L178.30,234.11 L178.50,234.11 L178.70,234.11 L178.90,234.11 L179.10,234.11 L179.30,234.11 L179.50,234.11 L179.70,234.11 L179.90,234.11 L180.10,234.11 L180.30,234.11 L180.50,234.11 L180.70,234.11 L180.90,234.11 L181.10,234.11 L181.30,234.11 L181.50,234.11 L181.70,234.11 L181.90,234.11 L182.10,234.11 L182.30,234.11 L182.50,234.11 L182.70,234.11 L182.90,234.11 L183.10,234.11 L183.30,234.11 L183.50,234.11 L183.70,234.11 L183.90,234.11 L184.10,234.11 L184.30,234.11 L184.50,234.11 L184.70,234.11 L184.90,234.11 L185.10,234.11 L185.30,234.11 L185.50,234.11 L185.70,234.11 L185.90,234.11 L186.10,234.11 L186.30,234.11 L186.50,234.11 L186.70,234.11 L186.90,234.11 L187.10,234.11 L187.30,234.11 L187.50,234.11 L187.70,234.11 L187.90,234.11 L188.10,234.11 L188.30,234.11 L188.50,234.11 L188.70,234.11 L188.90,234.11 L189.10,234.11 L189.30,234.11 L189.50,234.11 L189.70,234.11 L189.90,234.11 L190.10,234.11 L190.30,234.11 L190.50,234.11 L190.70,234.11 L190.90,234.11 L191.10,234.11 L191.30,234.11 L191.50,234.11 L191.70,234.11 L191.90,234.11 L192.10,234.11 L192.30,234.11 L192.50,234.11 L192.70,234.11 L192.90,234.11 L193.10,234.11 L193.30,234.11 L193.50,234.11 L193.70,234.11 L193.90,234.11 L194.10,234.11 L194.30,234.11 L194.50,234.11 L194.70,234.11 L194.90,234.11 L195.10,234.10 L195.30,234.10 L195.50,234.09 L195.70,234.08 L195.90,234.07 L196.10,234.05 L196.30,234.03 L196.50,234.00 L196.70,233.96 L196.90,233.90 L197.10,233.84 L197.30,233.77 L197.50,233.68 L197.70,233.59 L197.90,233.48 L198.10,233.28 L198.30,232.33 L198.50,227.49 L198.70,211.44 L198.90,180.30 L199.05,156.26 L199.10,150.73 L199.20,146.03 L199.30,150.73 L199.35,156.26 L199.50,180.30 L199.70,197.13 L199.85,180.60 L199.90,176.81 L200.00,173.57 L200.10,176.81 L200.15,180.60 L200.30,197.13 L200.50,218.53 L200.70,229.56 L200.90,232.89 L201.10,233.54 L201.30,233.68 L201.50,233.75 L201.70,233.81 L201.90,233.87 L202.10,233.92 L202.30,233.97 L202.50,234.00 L202.70,234.03 L202.90,234.06 L203.10,234.07 L203.30,234.08 L203.50,234.09 L203.70,234.10 L203.90,234.10 L204.10,234.10 L204.30,234.11 L204.50,234.11 L204.70,234.11 L204.90,234.11 L205.10,234.11 L205.30,234.11 L205.50,234.11 L205.70,234.11 L205.90,234.11 L206.10,234.11 L206.30,234.11 L206.50,234.11 L206.70,234.11 L206.90,234.11 L207.10,234.11 L207.30,234.11 L207.50,234.11 L207.70,234.11 L207.90,234.11 L208.10,234.11 L208.30,234.11 L208.50,234.11 L208.70,234.11 L208.90,234.11 L209.10,234.11 L209.30,234.11 L209.50,234.11 L209.70,234.11 L209.90,234.11 L210.10,234.11 L210.30,234.11 L210.50,234.11 L210.70,234.11 L210.90,234.11 L211.10,234.11 L211.30,234.11 L211.50,234.11 L211.70,234.11 L211.90,234.11 L212.10,234.11 L212.30,234.11 L212.50,234.11 L212.70,234.11 L212.90,234.11 L213.10,234.11 L213.30,234.11 L213.50,234.11 L213.70,234.11 L213.90,234.11 L214.10,234.11 L214.30,234.11 L214.50,234.11 L214.70,234.11 L214.90,234.11 L215.10,234.11 L215.30,234.10 L215.50,234.10 L215.70,234.10 L215.90,234.09 L216.10,234.09 L216.30,234.08 L216.50,234.07 L216.70,234.06 L216.90,234.05 L217.10,234.03 L217.30,234.01 L217.50,233.96 L217.70,233.69 L217.90,232.65 L218.10,229.98 L218.30,225.65 L218.45,222.63 L218.50,221.96 L218.60,221.40 L218.70,221.96 L218.75,222.63 L218.90,225.65 L219.10,229.98 L219.30,232.65 L219.50,233.69 L219.70,233.96 L219.90,234.01 L220.10,234.03 L220.30,234.05 L220.50,234.06 L220.70,234.07 L220.90,234.08 L221.10,234.09 L221.30,234.09 L221.50,234.10 L221.70,234.10 L221.90,234.10 L222.10,234.11 L222.30,234.11 L222.50,234.11 L222.70,234.11 L222.90,234.11 L223.10,234.11 L223.30,234.11 L223.50,234.11 L223.70,234.11 L223.90,234.11 L224.10,234.11 L224.30,234.11 L224.50,234.11 L224.70,234.11 L224.90,234.11 L225.10,234.11 L225.30,234.11 L225.50,234.11 L225.70,234.11 L225.90,234.11 L226.10,234.11 L226.30,234.11 L226.50,234.11 L226.70,234.11 L226.90,234.11 L227.10,234.11 L227.30,234.11 L227.50,234.11 L227.70,234.11 L227.90,234.11 L228.10,234.11 L228.30,234.11 L228.50,234.11 L228.70,234.11 L228.90,234.11 L229.10,234.11 L229.30,234.11 L229.50,234.11 L229.70,234.11 L229.90,234.11 L230.10,234.11 L230.30,234.11 L230.50,234.11 L230.70,234.11 L230.90,234.11 L231.10,234.11 L231.30,234.11 L231.50,234.11 L231.70,234.11 L231.90,234.11 L232.10,234.11 L232.30,234.11 L232.50,234.11 L232.70,234.11 L232.90,234.11 L233.10,234.11 L233.30,234.11 L233.50,234.11 L233.70,234.11 L233.90,234.11 L234.10,234.11 L234.30,234.11 L234.50,234.11 L234.70,234.11 L234.90,234.11 L235.10,234.11 L235.30,234.11 L235.50,234.11 L235.70,234.11 L235.90,234.11 L236.10,234.11 L236.30,234.11 L236.50,234.11 L236.70,234.11 L236.90,234.11 L237.10,234.11 L237.30,234.11 L237.50,234.11 L237.70,234.11 L237.90,234.11 L238.10,234.11 L238.30,234.11 L238.50,234.11 L238.70,234.11 L238.90,234.11 L239.10,234.11 L239.30,234.11 L239.50,234.11 L239.70,234.11 L239.90,234.11 L240.10,234.11 L240.30,234.11 L240.50,234.11 L240.70,234.11 L240.90,234.11 L241.10,234.11 L241.30,234.11 L241.50,234.11 L241.70,234.11 L241.90,234.11 L242.10,234.11 L242.30,234.11 L242.50,234.11 L242.70,234.11 L242.90,234.11 L243.10,234.11 L243.30,234.11 L243.50,234.11 L243.70,234.11 L243.90,234.11 L244.10,234.11 L244.30,234.11 L244.50,234.11 L244.70,234.11 L244.90,234.11 L245.10,234.11 L245.30,234.11 L245.50,234.11 L245.70,234.11 L245.90,234.11 L246.10,234.11 L246.30,234.11 L246.50,234.11 L246.70,234.11 L246.90,234.11 L247.10,234.11 L247.30,234.11 L247.50,234.11 L247.70,234.11 L247.90,234.11 L248.10,234.11 L248.30,234.11 L248.50,234.11 L248.70,234.11 L248.90,234.11 L249.10,234.11 L249.30,234.11 L249.50,234.11 L249.70,234.11 L249.90,234.11 L250.10,234.11 L250.30,234.11 L250.50,234.11 L250.70,234.11 L250.90,234.11 L251.10,234.11 L251.30,234.11 L251.50,234.11 L251.70,234.11 L251.90,234.11 L252.10,234.11 L252.30,234.11 L252.50,234.11 L252.70,234.11 L252.90,234.11 L253.10,234.11 L253.30,234.11 L253.50,234.11 L253.70,234.11 L253.90,234.11 L254.10,234.11 L254.30,234.11 L254.50,234.11 L254.70,234.11 L254.90,234.11 L255.10,234.11 L255.30,234.11 L255.50,234.11 L255.70,234.11 L255.90,234.11 L256.10,234.11 L256.30,234.11 L256.50,234.11 L256.70,234.11 L256.90,234.11 L257.10,234.11 L257.30,234.11 L257.50,234.11 L257.70,234.11 L257.90,234.11 L258.10,234.11 L258.30,234.11 L258.50,234.11 L258.70,234.11 L258.90,234.11 L259.10,234.11 L259.30,234.11 L259.50,234.11 L259.70,234.11 L259.90,234.11 L260.10,234.11 L260.30,234.11 L260.50,234.11 L260.70,234.11 L260.90,234.11 L261.10,234.11 L261.30,234.11 L261.50,234.10 L261.70,234.10 L261.90,234.10 L262.10,234.10 L262.30,234.09 L262.50,234.08 L262.70,234.08 L262.90,234.07 L263.10,234.06 L263.30,234.04 L263.50,234.00 L263.70,233.86 L263.90,233.38 L264.10,232.08 L264.30,229.59 L264.50,226.32 L264.65,224.30 L264.70,223.87 L264.80,223.51 L264.90,223.87 L264.95,224.30 L265.10,226.32 L265.30,229.59 L265.50,232.08 L265.70,233.38 L265.90,233.86 L266.10,234.00 L266.30,234.04 L266.50,234.06 L266.70,234.07 L266.90,234.08 L267.10,234.08 L267.30,234.09 L267.50,234.10 L267.70,234.10 L267.90,234.10 L268.10,234.10 L268.30,234.11 L268.50,234.11 L268.70,234.11 L268.90,234.11 L269.10,234.11 L269.30,234.11 L269.50,234.11 L269.70,234.11 L269.90,234.11 L270.10,234.11 L270.30,234.11 L270.50,234.11 L270.70,234.11 L270.90,234.11 L271.10,234.11 L271.30,234.11 L271.50,234.11 L271.70,234.11 L271.90,234.11 L272.10,234.11 L272.30,234.11 L272.50,234.11 L272.70,234.11 L272.90,234.11 L273.10,234.11 L273.30,234.11 L273.50,234.11 L273.70,234.11 L273.90,234.11 L274.10,234.11 L274.30,234.11 L274.50,234.11 L274.70,234.11 L274.90,234.11 L275.10,234.11 L275.30,234.11 L275.50,234.11 L275.70,234.11 L275.90,234.11 L276.10,234.11 L276.30,234.11 L276.50,234.11 L276.70,234.11 L276.90,234.11 L277.10,234.11 L277.30,234.11 L277.50,234.11 L277.70,234.11 L277.90,234.11 L278.10,234.11 L278.30,234.11 L278.50,234.11 L278.70,234.11 L278.90,234.11 L279.10,234.11 L279.30,234.11 L279.50,234.11 L279.70,234.11 L279.90,234.11 L280.10,234.11 L280.30,234.11 L280.50,234.11 L280.70,234.11 L280.90,234.11 L281.10,234.11 L281.30,234.11 L281.50,234.11 L281.70,234.11 L281.90,234.11 L282.10,234.11 L282.30,234.11 L282.50,234.11 L282.70,234.11 L282.90,234.11 L283.10,234.11 L283.30,234.11 L283.50,234.11 L283.70,234.11 L283.90,234.11 L284.10,234.11 L284.30,234.11 L284.50,234.11 L284.70,234.11 L284.90,234.11 L285.10,234.11 L285.30,234.11 L285.50,234.11 L285.70,234.11 L285.90,234.11 L286.10,234.11 L286.30,234.11 L286.50,234.11 L286.70,234.11 L286.90,234.11 L287.10,234.11 L287.30,234.11 L287.50,234.11 L287.70,234.11 L287.90,234.11 L288.10,234.10 L288.30,234.10 L288.50,234.10 L288.70,234.09 L288.90,234.09 L289.10,234.08 L289.30,234.07 L289.50,234.06 L289.70,234.04 L289.90,234.03 L290.10,234.01 L290.30,233.98 L290.50,233.90 L290.70,233.54 L290.90,232.16 L291.10,228.57 L291.30,222.77 L291.45,218.71 L291.50,217.81 L291.60,217.06 L291.70,217.81 L291.75,218.71 L291.90,222.77 L292.10,228.57 L292.30,232.16 L292.50,233.05 L292.70,230.70 L292.90,225.83 L293.10,219.89 L293.15,218.71 L293.30,217.06 L293.45,218.71 L293.50,219.89 L293.70,225.83 L293.90,230.70 L294.10,233.05 L294.30,233.79 L294.50,233.96 L294.70,234.00 L294.90,234.02 L295.10,234.03 L295.30,234.05 L295.50,234.06 L295.70,234.07 L295.90,234.08 L296.10,234.09 L296.30,234.10 L296.50,234.10 L296.70,234.10 L296.90,234.10 L297.10,234.11 L297.30,234.11 L297.50,234.11 L297.70,234.11 L297.90,234.11 L298.10,234.11 L298.30,234.11 L298.50,234.11 L298.70,234.11 L298.90,234.11 L299.10,234.11 L299.30,234.11 L299.50,234.11 L299.70,234.11 L299.90,234.11 L300.10,234.11 L300.30,234.11 L300.50,234.11 L300.70,234.11 L300.90,234.11 L301.10,234.11 L301.30,234.11 L301.50,234.11 L301.70,234.11 L301.90,234.11 L302.10,234.11 L302.30,234.11 L302.50,234.11 L302.70,234.11 L302.90,234.11 L303.10,234.11 L303.30,234.11 L303.50,234.11 L303.70,234.11 L303.90,234.11 L304.10,234.11 L304.30,234.11 L304.50,234.11 L304.70,234.11 L304.90,234.11 L305.10,234.11 L305.30,234.11 L305.50,234.11 L305.70,234.11 L305.90,234.11 L306.10,234.10 L306.30,234.10 L306.50,234.10 L306.70,234.10 L306.90,234.09 L307.10,234.08 L307.30,234.08 L307.50,234.07 L307.70,234.06 L307.90,234.04 L308.10,233.98 L308.30,233.74 L308.50,233.03 L308.70,231.40 L308.90,228.79 L309.10,226.10 L309.15,225.61 L309.30,224.93 L309.45,225.61 L309.50,226.10 L309.70,228.79 L309.90,231.40 L310.10,233.03 L310.30,233.74 L310.50,233.98 L310.70,234.04 L310.90,234.06 L311.10,234.07 L311.30,234.08 L311.50,234.08 L311.70,234.09 L311.90,234.10 L312.10,234.10 L312.30,234.10 L312.50,234.10 L312.70,234.11 L312.90,234.11 L313.10,234.11 L313.30,234.11 L313.50,234.11 L313.70,234.11 L313.90,234.11 L314.10,234.11 L314.30,234.11 L314.50,234.11 L314.70,234.11 L314.90,234.11 L315.10,234.11 L315.30,234.11 L315.50,234.11 L315.70,234.11 L315.90,234.11 L316.10,234.11 L316.30,234.11 L316.50,234.11 L316.70,234.11 L316.90,234.11 L317.10,234.11 L317.30,234.11 L317.50,234.11 L317.70,234.11 L317.90,234.11 L318.10,234.11 L318.30,234.11 L318.50,234.11 L318.70,234.11 L318.90,234.11 L319.10,234.11 L319.30,234.11 L319.50,234.11 L319.70,234.11 L319.90,234.11 L320.10,234.11 L320.30,234.11 L320.50,234.11 L320.70,234.11 L320.90,234.11 L321.10,234.11 L321.30,234.11 L321.50,234.11 L321.70,234.11 L321.90,234.11 L322.10,234.11 L322.30,234.11 L322.50,234.11 L322.70,234.11 L322.90,234.11 L323.10,234.11 L323.30,234.11 L323.50,234.11 L323.70,234.11 L323.90,234.11 L324.10,234.11 L324.30,234.11 L324.50,234.11 L324.70,234.11 L324.90,234.11 L325.10,234.11 L325.30,234.11 L325.50,234.11 L325.70,234.11 L325.90,234.11 L326.10,234.11 L326.30,234.11 L326.50,234.11 L326.70,234.11 L326.90,234.11 L327.10,234.11 L327.30,234.11 L327.50,234.11 L327.70,234.11 L327.90,234.11 L328.10,234.11 L328.30,234.11 L328.50,234.11 L328.70,234.11 L328.90,234.11 L329.10,234.11 L329.30,234.11 L329.50,234.11 L329.70,234.11 L329.90,234.11 L330.10,234.11 L330.30,234.11 L330.50,234.11 L330.70,234.11 L330.90,234.11 L331.10,234.11 L331.30,234.11 L331.50,234.11 L331.70,234.11 L331.90,234.11 L332.10,234.11 L332.30,234.11 L332.50,234.11 L332.70,234.11 L332.90,234.11 L333.10,234.11 L333.30,234.11 L333.50,234.11 L333.70,234.11 L333.90,234.11 L334.10,234.11 L334.30,234.11 L334.50,234.11 L334.70,234.11 L334.90,234.11 L335.10,234.11 L335.30,234.11 L335.50,234.11 L335.70,234.11 L335.90,234.11 L336.10,234.11 L336.30,234.11 L336.50,234.11 L336.70,234.11 L336.90,234.11 L337.10,234.11 L337.30,234.11 L337.50,234.10 L337.70,234.10 L337.90,234.10 L338.10,234.10 L338.30,234.10 L338.50,234.10 L338.70,234.10 L338.90,234.10 L339.10,234.10 L339.30,234.10 L339.50,234.09 L339.70,234.09 L339.90,234.09 L340.10,234.09 L340.30,234.08 L340.50,234.08 L340.70,234.08 L340.90,234.08 L341.10,234.07 L341.30,234.07 L341.50,234.06 L341.70,234.06 L341.90,234.05 L342.10,234.04 L342.30,234.04 L342.50,234.03 L342.70,234.02 L342.90,234.01 L343.10,234.00 L343.30,233.99 L343.50,233.98 L343.70,233.97 L343.90,233.96 L344.10,233.94 L344.30,233.93 L344.50,233.91 L344.70,233.89 L344.90,233.88 L345.10,233.86 L345.30,233.84 L345.50,233.81 L345.70,233.79 L345.90,233.77 L346.10,233.74 L346.30,233.71 L346.50,233.69 L346.70,233.66 L346.90,233.63 L347.10,233.59 L347.30,233.56 L347.50,233.53 L347.70,233.49 L347.90,233.45 L348.10,233.42 L348.30,233.38 L348.50,233.34 L348.70,233.30 L348.90,233.26 L349.10,233.21 L349.30,233.17 L349.50,233.13 L349.70,233.09 L349.90,233.04 L350.10,233.00 L350.30,232.95 L350.50,232.91 L350.70,232.87 L350.90,232.83 L351.10,232.78 L351.30,232.74 L351.50,232.70 L351.70,232.66 L351.90,232.63 L352.10,232.59 L352.30,232.56 L352.50,232.52 L352.70,232.49 L352.90,232.46 L353.10,232.43 L353.30,232.41 L353.50,232.38 L353.70,232.36 L353.90,232.34 L354.10,232.33 L354.30,232.31 L354.50,232.30 L354.70,232.30 L354.85,232.29 L354.90,232.29 L355.00,232.29 L355.10,232.29 L355.15,232.29 L355.30,232.30 L355.50,232.30 L355.70,232.31 L355.90,232.33 L356.10,232.34 L356.30,232.36 L356.50,232.38 L356.70,232.41 L356.90,232.43 L357.10,232.46 L357.30,232.49 L357.50,232.52 L357.70,232.56 L357.90,232.59 L358.10,232.63 L358.30,232.66 L358.50,232.70 L358.70,232.74 L358.90,232.78 L359.10,232.83 L359.30,232.87 L359.50,232.91 L359.70,232.95 L359.90,233.00 L360.10,233.04 L360.30,233.09 L360.50,233.13 L360.70,233.17 L360.90,233.21 L361.10,233.26 L361.30,233.30 L361.50,233.34 L361.70,233.38 L361.90,233.42 L362.10,233.45 L362.30,233.49 L362.50,233.53 L362.70,233.56 L362.90,233.59 L363.10,233.63 L363.30,233.66 L363.50,233.69 L363.70,233.71 L363.90,233.74 L364.10,233.77 L364.30,233.79 L364.50,233.81 L364.70,233.84 L364.90,233.86 L365.10,233.88 L365.30,233.89 L365.50,233.91 L365.70,233.93 L365.90,233.94 L366.10,233.96 L366.30,233.97 L366.50,233.98 L366.70,233.99 L366.90,234.00 L367.10,234.01 L367.30,234.02 L367.50,234.03 L367.70,234.04 L367.90,234.04 L368.10,234.05 L368.30,234.06 L368.50,234.06 L368.70,234.07 L368.90,234.07 L369.10,234.08 L369.30,234.08 L369.50,234.08 L369.70,234.08 L369.90,234.09 L370.10,234.09 L370.30,234.09 L370.50,234.09 L370.70,234.10 L370.90,234.10 L371.10,234.10 L371.30,234.10 L371.50,234.10 L371.70,234.10 L371.90,234.10 L372.10,234.10 L372.30,234.10 L372.50,234.10 L372.70,234.11 L372.90,234.11 L373.10,234.11 L373.30,234.11 L373.50,234.11 L373.70,234.11 L373.90,234.10 L374.10,234.10 L374.30,234.10 L374.50,234.09 L374.70,234.07 L374.90,234.02 L375.10,233.93 L375.30,233.76 L375.50,233.46 L375.70,232.98 L375.90,232.29 L376.10,231.39 L376.30,230.36 L376.50,229.33 L376.70,228.49 L376.85,228.09 L376.90,228.02 L377.00,227.95 L377.10,228.02 L377.15,228.09 L377.30,228.49 L377.50,229.33 L377.70,230.36 L377.90,231.39 L378.10,232.29 L378.30,232.98 L378.50,233.46 L378.70,233.76 L378.90,233.93 L379.10,234.02 L379.30,234.07 L379.50,234.09 L379.70,234.10 L379.90,234.10 L380.10,234.10 L380.30,234.11 L380.50,234.11 L380.70,234.11 L380.90,234.11 L381.10,234.11 L381.30,234.11 L381.50,234.11 L381.70,234.11 L381.90,234.11 L382.10,234.11 L382.30,234.11 L382.50,234.11 L382.70,234.11 L382.90,234.11 L383.10,234.11 L383.30,234.11 L383.50,234.11 L383.70,234.11 L383.90,234.11 L384.10,234.11 L384.30,234.11 L384.50,234.11 L384.70,234.11 L384.90,234.11 L385.10,234.11 L385.30,234.11 L385.50,234.11 L385.70,234.11 L385.90,234.11 L386.10,234.11 L386.30,234.11 L386.50,234.11 L386.70,234.11 L386.90,234.11 L387.10,234.11 L387.30,234.11 L387.50,234.11 L387.70,234.11 L387.90,234.10 L388.10,234.10 L388.30,234.10 L388.50,234.09 L388.70,234.07 L388.90,234.05 L389.10,234.03 L389.30,233.99 L389.50,233.94 L389.70,233.87 L389.90,233.78 L390.10,233.68 L390.30,233.55 L390.50,233.42 L390.70,233.27 L390.90,233.11 L391.10,232.97 L391.30,232.83 L391.50,232.72 L391.70,232.64 L391.85,232.61 L391.90,232.60 L392.00,232.60 L392.10,232.60 L392.15,232.61 L392.30,232.64 L392.50,232.72 L392.70,232.83 L392.90,232.97 L393.10,233.11 L393.30,233.27 L393.50,233.42 L393.70,233.55 L393.90,233.68 L394.10,233.78 L394.30,233.87 L394.50,233.94 L394.70,233.99 L394.90,234.03 L395.10,234.05 L395.30,234.07 L395.50,234.09 L395.70,234.10 L395.90,234.10 L396.10,234.10 L396.30,234.11 L396.50,234.11 L396.70,234.11 L396.90,234.11 L397.10,234.11 L397.30,234.11 L397.50,234.11 L397.70,234.11 L397.90,234.11" fill="none" stroke="#c81c1c" stroke-width="0.8"/>
<line x1="67" y1="87.3" x2="70.5" y2="87.3" stroke="#666" stroke-width="0.7"/>
<text x="65" y="88.89999999999999" font-size="4.2" text-anchor="end" fill="#444">15000</text>
<line x1="67" y1="137.5" x2="70.5" y2="137.5" stroke="#666" stroke-width="0.7"/>
<text x="65" y="139.1" font-size="4.2" text-anchor="end" fill="#444">10000</text>
<line x1="67" y1="187.3" x2="70.5" y2="187.3" stroke="#666" stroke-width="0.7"/>
<text x="65" y="188.9" font-size="4.2" text-anchor="end" fill="#444">5000</text>
<line x1="67" y1="237" x2="70.5" y2="237" stroke="#666" stroke-width="0.7"/>
<text x="65" y="238.6" font-size="4.2" text-anchor="end" fill="#444">0</text>
<line x1="78.70" y1="237.5" x2="78.70" y2="241.5" stroke="#555" stroke-width="0.6"/>
<line x1="82.46" y1="237.5" x2="82.46" y2="239.5" stroke="#555" stroke-width="0.6"/>
<line x1="86.22" y1="237.5" x2="86.22" y2="239.5" stroke="#555" stroke-width="0.6"/>
<line x1="89.98" y1="237.5" x2="89.98" y2="239.5" stroke="#555" stroke-width="0.6"/>
<line x1="93.74" y1="237.5" x2="93.74" y2="239.5" stroke="#555" stroke-width="0.6"/>
<line x1="97.50" y1="237.5" x2="97.50" y2="239.5" stroke="#555" stroke-width="0.6"/>
<line x1="101.26" y1="237.5" x2="101.26" y2="239.5" stroke="#555" stroke-width="0.6"/>
<line x1="105.02" y1="237.5" x2="105.02" y2="239.5" stroke="#555" stroke-width="0.6"/>
<line x1="108.78" y1="237.5" x2="108.78" y2="239.5" stroke="#555" stroke-width="0.6"/>
<line x1="112.54" y1="237.5" x2="112.54" y2="239.5" stroke="#555" stroke-width="0.6"/>
<line x1="116.30" y1="237.5" x2="116.30" y2="241.5" stroke="#555" stroke-width="0.6"/>
<line x1="120.06" y1="237.5" x2="120.06" y2="239.5" stroke="#555" stroke-width="0.6"/>
<line x1="123.82" y1="237.5" x2="123.82" y2="239.5" stroke="#555" stroke-width="0.6"/>
<line x1="127.58" y1="237.5" x2="127.58" y2="239.5" stroke="#555" stroke-width="0.6"/>
<line x1="131.34" y1="237.5" x2="131.34" y2="239.5" stroke="#555" stroke-width="0.6"/>
<line x1="135.10" y1="237.5" x2="135.10" y2="239.5" stroke="#555" stroke-width="0.6"/>
<line x1="138.86" y1="237.5" x2="138.86" y2="239.5" stroke="#555" stroke-width="0.6"/>
<line x1="142.62" y1="237.5" x2="142.62" y2="239.5" stroke="#555" stroke-width="0.6"/>
<line x1="146.38" y1="237.5" x2="146.38" y2="239.5" stroke="#555" stroke-width="0.6"/>
<line x1="150.14" y1="237.5" x2="150.14" y2="239.5" stroke="#555" stroke-width="0.6"/>
<line x1="153.90" y1="237.5" x2="153.90" y2="241.5" stroke="#555" stroke-width="0.6"/>
<line x1="157.66" y1="237.5" x2="157.66" y2="239.5" stroke="#555" stroke-width="0.6"/>
<line x1="161.42" y1="237.5" x2="161.42" y2="239.5" stroke="#555" stroke-width="0.6"/>
<line x1="165.18" y1="237.5" x2="165.18" y2="239.5" stroke="#555" stroke-width="0.6"/>
<line x1="168.94" y1="237.5" x2="168.94" y2="239.5" stroke="#555" stroke-width="0.6"/>
<line x1="172.70" y1="237.5" x2="172.70" y2="239.5" stroke="#555" stroke-width="0.6"/>
<line x1="176.46" y1="237.5" x2="176.46" y2="239.5" stroke="#555" stroke-width="0.6"/>
<line x1="180.22" y1="237.5" x2="180.22" y2="239.5" stroke="#555" stroke-width="0.6"/>
<line x1="183.98" y1="237.5" x2="183.98" y2="239.5" stroke="#555" stroke-width="0.6"/>
<line x1="187.74" y1="237.5" x2="187.74" y2="239.5" stroke="#555" stroke-width="0.6"/>
<line x1="191.50" y1="237.5" x2="191.50" y2="241.5" stroke="#555" stroke-width="0.6"/>
<line x1="195.26" y1="237.5" x2="195.26" y2="239.5" stroke="#555" stroke-width="0.6"/>
<line x1="199.02" y1="237.5" x2="199.02" y2="239.5" stroke="#555" stroke-width="0.6"/>
<line x1="202.78" y1="237.5" x2="202.78" y2="239.5" stroke="#555" stroke-width="0.6"/>
<line x1="206.54" y1="237.5" x2="206.54" y2="239.5" stroke="#555" stroke-width="0.6"/>
<line x1="210.30" y1="237.5" x2="210.30" y2="239.5" stroke="#555" stroke-width="0.6"/>
<line x1="214.06" y1="237.5" x2="214.06" y2="239.5" stroke="#555" stroke-width="0.6"/>
<line x1="217.82" y1="237.5" x2="217.82" y2="239.5" stroke="#555" stroke-width="0.6"/>
<line x1="221.58" y1="237.5" x2="221.58" y2="239.5" stroke="#555" stroke-width="0.6"/>
<line x1="225.34" y1="237.5" x2="225.34" y2="239.5" stroke="#555" stroke-width="0.6"/>
<line x1="229.10" y1="237.5" x2="229.10" y2="241.5" stroke="#555" stroke-width="0.6"/>
<line x1="232.86" y1="237.5" x2="232.86" y2="239.5" stroke="#555" stroke-width="0.6"/>
<line x1="236.62" y1="237.5" x2="236.62" y2="239.5" stroke="#555" stroke-width="0.6"/>
<line x1="240.38" y1="237.5" x2="240.38" y2="239.5" stroke="#555" stroke-width="0.6"/>
<line x1="244.14" y1="237.5" x2="244.14" y2="239.5" stroke="#555" stroke-width="0.6"/>
<line x1="247.90" y1="237.5" x2="247.90" y2="239.5" stroke="#555" stroke-width="0.6"/>
<line x1="251.66" y1="237.5" x2="251.66" y2="239.5" stroke="#555" stroke-width="0.6"/>
<line x1="255.42" y1="237.5" x2="255.42" y2="239.5" stroke="#555" stroke-width="0.6"/>
<line x1="259.18" y1="237.5" x2="259.18" y2="239.5" stroke="#555" stroke-width="0.6"/>
<line x1="262.94" y1="237.5" x2="262.94" y2="239.5" stroke="#555" stroke-width="0.6"/>
<line x1="266.70" y1="237.5" x2="266.70" y2="241.5" stroke="#555" stroke-width="0.6"/>
<line x1="270.46" y1="237.5" x2="270.46" y2="239.5" stroke="#555" stroke-width="0.6"/>
<line x1="274.22" y1="237.5" x2="274.22" y2="239.5" stroke="#555" stroke-width="0.6"/>
<line x1="277.98" y1="237.5" x2="277.98" y2="239.5" stroke="#555" stroke-width="0.6"/>
<line x1="281.74" y1="237.5" x2="281.74" y2="239.5" stroke="#555" stroke-width="0.6"/>
<line x1="285.50" y1="237.5" x2="285.50" y2="239.5" stroke="#555" stroke-width="0.6"/>
<line x1="289.26" y1="237.5" x2="289.26" y2="239.5" stroke="#555" stroke-width="0.6"/>
<line x1="293.02" y1="237.5" x2="293.02" y2="239.5" stroke="#555" stroke-width="0.6"/>
<line x1="296.78" y1="237.5" x2="296.78" y2="239.5" stroke="#555" stroke-width="0.6"/>
<line x1="300.54" y1="237.5" x2="300.54" y2="239.5" stroke="#555" stroke-width="0.6"/>
<line x1="304.30" y1="237.5" x2="304.30" y2="241.5" stroke="#555" stroke-width="0.6"/>
<line x1="308.06" y1="237.5" x2="308.06" y2="239.5" stroke="#555" stroke-width="0.6"/>
<line x1="311.82" y1="237.5" x2="311.82" y2="239.5" stroke="#555" stroke-width="0.6"/>
<line x1="315.58" y1="237.5" x2="315.58" y2="239.5" stroke="#555" stroke-width="0.6"/>
<line x1="319.34" y1="237.5" x2="319.34" y2="239.5" stroke="#555" stroke-width="0.6"/>
<line x1="323.10" y1="237.5" x2="323.10" y2="239.5" stroke="#555" stroke-width="0.6"/>
<line x1="326.86" y1="237.5" x2="326.86" y2="239.5" stroke="#555" stroke-width="0.6"/>
<line x1="330.62" y1="237.5" x2="330.62" y2="239.5" stroke="#555" stroke-width="0.6"/>
<line x1="334.38" y1="237.5" x2="334.38" y2="239.5" stroke="#555" stroke-width="0.6"/>
<line x1="338.14" y1="237.5" x2="338.14" y2="239.5" stroke="#555" stroke-width="0.6"/>
<line x1="341.90" y1="237.5" x2="341.90" y2="241.5" stroke="#555" stroke-width="0.6"/>
<line x1="345.66" y1="237.5" x2="345.66" y2="239.5" stroke="#555" stroke-width="0.6"/>
<line x1="349.42" y1="237.5" x2="349.42" y2="239.5" stroke="#555" stroke-width="0.6"/>
<line x1="353.18" y1="237.5" x2="353.18" y2="239.5" stroke="#555" stroke-width="0.6"/>
<line x1="356.94" y1="237.5" x2="356.94" y2="239.5" stroke="#555" stroke-width="0.6"/>
<line x1="360.70" y1="237.5" x2="360.70" y2="239.5" stroke="#555" stroke-width="0.6"/>
<line x1="364.46" y1="237.5" x2="364.46" y2="239.5" stroke="#555" stroke-width="0.6"/>
<line x1="368.22" y1="237.5" x2="368.22" y2="239.5" stroke="#555" stroke-width="0.6"/>
<line x1="371.98" y1="237.5" x2="371.98" y2="239.5" stroke="#555" stroke-width="0.6"/>
<line x1="375.74" y1="237.5" x2="375.74" y2="239.5" stroke="#555" stroke-width="0.6"/>
<line x1="379.50" y1="237.5" x2="379.50" y2="241.5" stroke="#555" stroke-width="0.6"/>
<line x1="383.26" y1="237.5" x2="383.26" y2="239.5" stroke="#555" stroke-width="0.6"/>
<line x1="387.02" y1="237.5" x2="387.02" y2="239.5" stroke="#555" stroke-width="0.6"/>
<line x1="390.78" y1="237.5" x2="390.78" y2="239.5" stroke="#555" stroke-width="0.6"/>
<text x="78.7" y="246.5" font-size="4.2" text-anchor="middle" fill="#555">20</text>
<text x="116.3" y="246.5" font-size="4.2" text-anchor="middle" fill="#555">30</text>
<text x="153.9" y="246.5" font-size="4.2" text-anchor="middle" fill="#555">40</text>
<text x="191.5" y="246.5" font-size="4.2" text-anchor="middle" fill="#555">50</text>
<text x="229.1" y="246.5" font-size="4.2" text-anchor="middle" fill="#555">60</text>
<text x="266.7" y="246.5" font-size="4.2" text-anchor="middle" fill="#555">70</text>
<text x="304.3" y="246.5" font-size="4.2" text-anchor="middle" fill="#555">80</text>
<text x="341.9" y="246.5" font-size="4.2" text-anchor="middle" fill="#555">90</text>
<text x="379.5" y="246.5" font-size="4.2" text-anchor="middle" fill="#555">100</text>
<text x="245" y="255.8" font-size="4.2" text-anchor="middle" fill="#555">Position [°2Theta] (Copper (Cu))</text>
<text x="31" y="81.5" font-size="4.4" fill="#777">Counts</text>
<text x="72.5" y="88" font-size="4.6" fill="#333">HM8A</text>
</svg>
<!-- tab strip between charts -->
<div class="a" style="left:29px;top:266px;width:388px;height:7px;background:#e2ebf8;border-top:1px solid #a9b7c8"></div><div class="a" style="left:30px;top:267px;width:112px;height:6px;background:#eef1f5"></div>
<div class="t" style="left:31px;top:267px;font-size:4px;line-height:6px;color:#9aa4b0;letter-spacing:.2px">■ Peak list ■ Scan ■ List ■ ■ ■ ■ </div>
<div class="t" style="left:100px;top:267px;font-size:4px;line-height:6px;color:#222;font-weight:bold">■ Sample</div>
<div class="t" style="left:118px;top:267px;font-size:4px;line-height:6px;color:#9aa4b0">■ ■ ■ ■</div>
<div class="a" style="left:29px;top:273px;width:388px;height:7px;background:#e2ebf8;border-bottom:1px solid #8a98a8;font-size:3.9px;line-height:6px;font-weight:bold;color:#112;padding-left:1px">Additional Graphics</div><div class="t" style="left:413px;top:273px;font-size:5px;line-height:6px;color:#333">×</div>
<svg class="a" style="left:0;top:0" width="900" height="485" viewBox="0 0 900 485">
<rect x="70.5" y="299.5" width="328" height="143" fill="#b0b0b0" stroke="#808080" stroke-width="1"/><rect x="72" y="301" width="326" height="141" fill="#000"/>
<defs><linearGradient id="cg" gradientUnits="userSpaceOnUse" x1="0" y1="300" x2="0" y2="442"><stop offset="0" stop-color="#48d4e0"/><stop offset="0.84" stop-color="#40ccd8"/><stop offset="0.92" stop-color="#90c0b8"/><stop offset="0.97" stop-color="#6a7a78"/><stop offset="1" stop-color="#707c7c"/></linearGradient></defs>
<path d="M72.00,439.08 L72.20,439.07 L72.40,439.07 L72.60,439.07 L72.80,439.06 L73.00,439.06 L73.20,439.06 L73.40,439.05 L73.60,439.05 L73.80,439.04 L74.00,439.04 L74.20,439.04 L74.40,439.03 L74.60,439.03 L74.80,439.02 L75.00,439.02 L75.20,439.02 L75.40,439.01 L75.60,439.01 L75.80,439.00 L76.00,439.00 L76.20,438.99 L76.40,438.99 L76.60,438.98 L76.80,438.98 L77.00,438.98 L77.20,438.97 L77.40,438.97 L77.60,438.96 L77.80,438.96 L78.00,438.95 L78.20,438.95 L78.40,438.94 L78.60,438.94 L78.80,438.93 L79.00,438.93 L79.20,438.92 L79.40,438.92 L79.60,438.91 L79.80,438.91 L80.00,438.90 L80.20,438.90 L80.40,438.89 L80.60,438.89 L80.80,438.88 L81.00,438.88 L81.20,438.87 L81.40,438.87 L81.60,438.86 L81.80,438.85 L82.00,438.84 L82.20,438.83 L82.40,438.81 L82.60,438.79 L82.80,438.76 L83.00,438.73 L83.20,438.68 L83.40,438.62 L83.60,438.55 L83.80,438.46 L84.00,438.29 L84.20,437.03 L84.40,433.78 L84.60,428.51 L84.75,424.83 L84.80,424.01 L84.90,423.32 L85.00,424.01 L85.05,424.82 L85.20,428.49 L85.40,408.68 L85.60,367.33 L85.75,335.41 L85.80,328.07 L85.90,321.82 L86.00,328.07 L86.05,335.41 L86.20,367.32 L86.40,408.66 L86.60,429.96 L86.80,436.38 L87.00,437.65 L87.20,437.91 L87.40,438.04 L87.60,438.16 L87.80,438.27 L88.00,438.37 L88.20,438.45 L88.40,438.52 L88.60,438.57 L88.80,438.61 L89.00,438.64 L89.20,438.66 L89.40,438.67 L89.60,438.68 L89.80,438.68 L90.00,438.68 L90.20,438.68 L90.40,438.68 L90.60,438.68 L90.80,438.68 L91.00,438.68 L91.20,438.68 L91.40,438.68 L91.60,438.67 L91.80,438.67 L92.00,438.67 L92.20,438.67 L92.40,438.67 L92.60,438.67 L92.80,438.66 L93.00,438.66 L93.20,438.66 L93.40,438.66 L93.60,438.66 L93.80,438.66 L94.00,438.66 L94.20,438.66 L94.40,438.66 L94.60,438.66 L94.80,438.66 L95.00,438.66 L95.20,438.66 L95.40,438.66 L95.60,438.66 L95.80,438.66 L96.00,438.66 L96.20,438.66 L96.40,438.66 L96.60,438.66 L96.80,438.66 L97.00,438.66 L97.20,438.66 L97.40,438.67 L97.60,438.67 L97.80,438.67 L98.00,438.67 L98.20,438.67 L98.40,438.67 L98.60,438.68 L98.80,438.68 L99.00,438.68 L99.20,438.68 L99.40,438.68 L99.60,438.69 L99.80,438.69 L100.00,438.69 L100.20,438.69 L100.40,438.70 L100.60,438.70 L100.80,438.70 L101.00,438.71 L101.20,438.71 L101.40,438.71 L101.60,438.72 L101.80,438.72 L102.00,438.72 L102.20,438.73 L102.40,438.73 L102.60,438.73 L102.80,438.74 L103.00,438.74 L103.20,438.75 L103.40,438.75 L103.60,438.75 L103.80,438.76 L104.00,438.76 L104.20,438.77 L104.40,438.77 L104.60,438.78 L104.80,438.78 L105.00,438.78 L105.20,438.79 L105.40,438.79 L105.60,438.80 L105.80,438.80 L106.00,438.81 L106.20,438.81 L106.40,438.82 L106.60,438.82 L106.80,438.83 L107.00,438.83 L107.20,438.84 L107.40,438.84 L107.60,438.85 L107.80,438.85 L108.00,438.85 L108.20,438.86 L108.40,438.86 L108.60,438.87 L108.80,438.87 L109.00,438.88 L109.20,438.88 L109.40,438.89 L109.60,438.89 L109.80,438.90 L110.00,438.90 L110.20,438.91 L110.40,438.91 L110.60,438.92 L110.80,438.92 L111.00,438.93 L111.20,438.93 L111.40,438.94 L111.60,438.94 L111.80,438.95 L112.00,438.95 L112.20,438.96 L112.40,438.96 L112.60,438.97 L112.80,438.97 L113.00,438.98 L113.20,438.98 L113.40,438.98 L113.60,438.99 L113.80,438.99 L114.00,439.00 L114.20,439.00 L114.40,439.01 L114.60,439.01 L114.80,439.02 L115.00,439.02 L115.20,439.02 L115.40,439.03 L115.60,439.03 L115.80,439.04 L116.00,439.04 L116.20,439.04 L116.40,439.05 L116.60,439.05 L116.80,439.06 L117.00,439.06 L117.20,439.06 L117.40,439.07 L117.60,439.07 L117.80,439.07 L118.00,439.08 L118.20,439.08 L118.40,439.08 L118.60,439.09 L118.80,439.09 L119.00,439.09 L119.20,439.10 L119.40,439.10 L119.60,439.10 L119.80,439.11 L120.00,439.11 L120.20,439.11 L120.40,439.12 L120.60,439.12 L120.80,439.12 L121.00,439.12 L121.20,439.13 L121.40,439.13 L121.60,439.13 L121.80,439.14 L122.00,439.14 L122.20,439.14 L122.40,439.14 L122.60,439.15 L122.80,439.15 L123.00,439.15 L123.20,439.15 L123.40,439.15 L123.60,439.16 L123.80,439.16 L124.00,439.16 L124.20,439.16 L124.40,439.16 L124.60,439.17 L124.80,439.17 L125.00,439.17 L125.20,439.17 L125.40,439.17 L125.60,439.18 L125.80,439.18 L126.00,439.18 L126.20,439.18 L126.40,439.18 L126.60,439.18 L126.80,439.18 L127.00,439.19 L127.20,439.19 L127.40,439.19 L127.60,439.19 L127.80,439.19 L128.00,439.19 L128.20,439.19 L128.40,439.20 L128.60,439.20 L128.80,439.20 L129.00,439.20 L129.20,439.20 L129.40,439.20 L129.60,439.20 L129.80,439.20 L130.00,439.20 L130.20,439.20 L130.40,439.21 L130.60,439.21 L130.80,439.21 L131.00,439.21 L131.20,439.21 L131.40,439.21 L131.60,439.21 L131.80,439.21 L132.00,439.21 L132.20,439.21 L132.40,439.21 L132.60,439.21 L132.80,439.21 L133.00,439.21 L133.20,439.22 L133.40,439.22 L133.60,439.22 L133.80,439.22 L134.00,439.22 L134.20,439.22 L134.40,439.22 L134.60,439.22 L134.80,439.22 L135.00,439.22 L135.20,439.22 L135.40,439.22 L135.60,439.22 L135.80,439.22 L136.00,439.22 L136.20,439.22 L136.40,439.22 L136.60,439.22 L136.80,439.22 L137.00,439.22 L137.20,439.22 L137.40,439.22 L137.60,439.22 L137.80,439.22 L138.00,439.22 L138.20,439.23 L138.40,439.23 L138.60,439.23 L138.80,439.23 L139.00,439.23 L139.20,439.23 L139.40,439.23 L139.60,439.23 L139.80,439.23 L140.00,439.23 L140.20,439.23 L140.40,439.23 L140.60,439.23 L140.80,439.23 L141.00,439.23 L141.20,439.23 L141.40,439.23 L141.60,439.23 L141.80,439.23 L142.00,439.23 L142.20,439.23 L142.40,439.23 L142.60,439.23 L142.80,439.23 L143.00,439.23 L143.20,439.23 L143.40,439.23 L143.60,439.23 L143.80,439.23 L144.00,439.23 L144.20,439.23 L144.40,439.23 L144.60,439.23 L144.80,439.23 L145.00,439.23 L145.20,439.23 L145.40,439.23 L145.60,439.23 L145.80,439.23 L146.00,439.23 L146.20,439.23 L146.40,439.23 L146.60,439.23 L146.80,439.23 L147.00,439.23 L147.20,439.23 L147.40,439.23 L147.60,439.23 L147.80,439.23 L148.00,439.23 L148.20,439.23 L148.40,439.23 L148.60,439.23 L148.80,439.23 L149.00,439.23 L149.20,439.23 L149.40,439.23 L149.60,439.23 L149.80,439.23 L150.00,439.23 L150.20,439.23 L150.40,439.23 L150.60,439.23 L150.80,439.23 L151.00,439.23 L151.20,439.23 L151.40,439.23 L151.60,439.23 L151.80,439.23 L152.00,439.23 L152.20,439.23 L152.40,439.23 L152.60,439.23 L152.80,439.23 L153.00,439.23 L153.20,439.23 L153.40,439.23 L153.60,439.23 L153.80,439.23 L154.00,439.23 L154.20,439.23 L154.40,439.23 L154.60,439.23 L154.80,439.23 L155.00,439.23 L155.20,439.23 L155.40,439.23 L155.60,439.23 L155.80,439.23 L156.00,439.23 L156.20,439.23 L156.40,439.23 L156.60,439.23 L156.80,439.23 L157.00,439.23 L157.20,439.23 L157.40,439.23 L157.60,439.23 L157.80,439.23 L158.00,439.23 L158.20,439.23 L158.40,439.23 L158.60,439.23 L158.80,439.23 L159.00,439.23 L159.20,439.23 L159.40,439.23 L159.60,439.23 L159.80,439.23 L160.00,439.23 L160.20,439.23 L160.40,439.23 L160.60,439.22 L160.80,439.22 L161.00,439.22 L161.20,439.21 L161.40,439.20 L161.60,439.18 L161.80,439.16 L162.00,439.14 L162.20,439.11 L162.40,439.07 L162.60,439.02 L162.80,438.97 L163.00,438.91 L163.20,438.85 L163.40,438.73 L163.60,438.15 L163.80,435.23 L164.00,425.52 L164.20,406.70 L164.35,392.17 L164.40,388.82 L164.50,385.98 L164.60,388.82 L164.65,392.17 L164.80,406.70 L165.00,420.34 L165.15,411.90 L165.20,409.96 L165.30,408.30 L165.40,409.96 L165.45,411.90 L165.60,420.34 L165.80,431.27 L166.00,436.91 L166.20,438.61 L166.40,438.94 L166.60,439.01 L166.80,439.05 L167.00,439.08 L167.20,439.11 L167.40,439.14 L167.60,439.16 L167.80,439.18 L168.00,439.19 L168.20,439.20 L168.40,439.21 L168.60,439.22 L168.80,439.22 L169.00,439.23 L169.20,439.22 L169.40,439.22 L169.60,439.21 L169.80,439.21 L170.00,439.20 L170.20,439.18 L170.40,439.17 L170.60,439.15 L170.80,439.13 L171.00,439.11 L171.20,439.09 L171.40,439.04 L171.60,438.82 L171.80,437.71 L172.00,434.03 L172.20,426.89 L172.35,421.38 L172.40,420.11 L172.50,419.03 L172.60,420.11 L172.65,421.38 L172.80,426.89 L173.00,434.03 L173.20,437.71 L173.40,438.82 L173.60,439.04 L173.80,439.09 L174.00,439.11 L174.20,439.13 L174.40,439.15 L174.60,439.17 L174.80,439.18 L175.00,439.20 L175.20,439.21 L175.40,439.21 L175.60,439.22 L175.80,439.22 L176.00,439.23 L176.20,439.23 L176.40,439.23 L176.60,439.23 L176.80,439.23 L177.00,439.23 L177.20,439.23 L177.40,439.23 L177.60,439.23 L177.80,439.23 L178.00,439.23 L178.20,439.23 L178.40,439.23 L178.60,439.23 L178.80,439.23 L179.00,439.23 L179.20,439.23 L179.40,439.23 L179.60,439.23 L179.80,439.23 L180.00,439.23 L180.20,439.23 L180.40,439.23 L180.60,439.23 L180.80,439.23 L181.00,439.23 L181.20,439.23 L181.40,439.23 L181.60,439.23 L181.80,439.23 L182.00,439.23 L182.20,439.23 L182.40,439.23 L182.60,439.23 L182.80,439.23 L183.00,439.23 L183.20,439.23 L183.40,439.23 L183.60,439.23 L183.80,439.23 L184.00,439.23 L184.20,439.23 L184.40,439.23 L184.60,439.23 L184.80,439.23 L185.00,439.23 L185.20,439.23 L185.40,439.23 L185.60,439.23 L185.80,439.23 L186.00,439.23 L186.20,439.23 L186.40,439.23 L186.60,439.23 L186.80,439.23 L187.00,439.23 L187.20,439.23 L187.40,439.23 L187.60,439.23 L187.80,439.23 L188.00,439.23 L188.20,439.23 L188.40,439.23 L188.60,439.23 L188.80,439.23 L189.00,439.23 L189.20,439.23 L189.40,439.23 L189.60,439.23 L189.80,439.23 L190.00,439.23 L190.20,439.23 L190.40,439.23 L190.60,439.23 L190.80,439.23 L191.00,439.23 L191.20,439.23 L191.40,439.23 L191.60,439.23 L191.80,439.23 L192.00,439.23 L192.20,439.23 L192.40,439.23 L192.60,439.23 L192.80,439.23 L193.00,439.23 L193.20,439.23 L193.40,439.23 L193.60,439.23 L193.80,439.23 L194.00,439.23 L194.20,439.23 L194.40,439.23 L194.60,439.23 L194.80,439.23 L195.00,439.23 L195.20,439.22 L195.40,439.22 L195.60,439.21 L195.80,439.20 L196.00,439.19 L196.20,439.17 L196.40,439.14 L196.60,439.11 L196.80,439.06 L197.00,439.01 L197.20,438.94 L197.40,438.86 L197.60,438.78 L197.80,438.68 L198.00,438.56 L198.20,438.17 L198.40,436.03 L198.60,427.05 L198.80,404.00 L199.00,371.48 L199.05,364.66 L199.20,354.86 L199.35,364.66 L199.40,371.48 L199.60,404.00 L199.80,392.67 L199.85,387.98 L200.00,381.24 L200.15,387.98 L200.20,392.67 L200.40,415.02 L200.60,430.86 L200.80,437.03 L201.00,438.50 L201.20,438.77 L201.40,438.85 L201.60,438.92 L201.80,438.98 L202.00,439.03 L202.20,439.08 L202.40,439.11 L202.60,439.15 L202.80,439.17 L203.00,439.19 L203.20,439.20 L203.40,439.21 L203.60,439.22 L203.80,439.22 L204.00,439.23 L204.20,439.23 L204.40,439.23 L204.60,439.23 L204.80,439.23 L205.00,439.23 L205.20,439.23 L205.40,439.23 L205.60,439.23 L205.80,439.23 L206.00,439.23 L206.20,439.23 L206.40,439.23 L206.60,439.23 L206.80,439.23 L207.00,439.23 L207.20,439.23 L207.40,439.23 L207.60,439.23 L207.80,439.23 L208.00,439.23 L208.20,439.23 L208.40,439.23 L208.60,439.23 L208.80,439.23 L209.00,439.23 L209.20,439.23 L209.40,439.23 L209.60,439.23 L209.80,439.23 L210.00,439.23 L210.20,439.23 L210.40,439.23 L210.60,439.23 L210.80,439.23 L211.00,439.23 L211.20,439.23 L211.40,439.23 L211.60,439.23 L211.80,439.23 L212.00,439.23 L212.20,439.23 L212.40,439.23 L212.60,439.23 L212.80,439.23 L213.00,439.23 L213.20,439.23 L213.40,439.23 L213.60,439.23 L213.80,439.23 L214.00,439.23 L214.20,439.23 L214.40,439.23 L214.60,439.23 L214.80,439.23 L215.00,439.23 L215.20,439.23 L215.40,439.22 L215.60,439.22 L215.80,439.22 L216.00,439.21 L216.20,439.21 L216.40,439.20 L216.60,439.19 L216.80,439.18 L217.00,439.16 L217.20,439.15 L217.40,439.12 L217.60,439.00 L217.80,438.47 L218.00,436.80 L218.20,433.32 L218.40,429.07 L218.45,428.24 L218.60,427.05 L218.75,428.24 L218.80,429.07 L219.00,433.32 L219.20,436.80 L219.40,438.47 L219.60,439.00 L219.80,439.12 L220.00,439.15 L220.20,439.16 L220.40,439.18 L220.60,439.19 L220.80,439.20 L221.00,439.21 L221.20,439.21 L221.40,439.22 L221.60,439.22 L221.80,439.22 L222.00,439.23 L222.20,439.23 L222.40,439.23 L222.60,439.23 L222.80,439.23 L223.00,439.23 L223.20,439.23 L223.40,439.23 L223.60,439.23 L223.80,439.23 L224.00,439.23 L224.20,439.23 L224.40,439.23 L224.60,439.23 L224.80,439.23 L225.00,439.23 L225.20,439.23 L225.40,439.23 L225.60,439.23 L225.80,439.23 L226.00,439.23 L226.20,439.23 L226.40,439.23 L226.60,439.23 L226.80,439.23 L227.00,439.23 L227.20,439.23 L227.40,439.23 L227.60,439.23 L227.80,439.23 L228.00,439.23 L228.20,439.23 L228.40,439.23 L228.60,439.23 L228.80,439.23 L229.00,439.23 L229.20,439.23 L229.40,439.23 L229.60,439.23 L229.80,439.23 L230.00,439.23 L230.20,439.23 L230.40,439.23 L230.60,439.23 L230.80,439.23 L231.00,439.23 L231.20,439.23 L231.40,439.23 L231.60,439.23 L231.80,439.23 L232.00,439.23 L232.20,439.23 L232.40,439.23 L232.60,439.23 L232.80,439.23 L233.00,439.23 L233.20,439.23 L233.40,439.23 L233.60,439.23 L233.80,439.23 L234.00,439.23 L234.20,439.23 L234.40,439.23 L234.60,439.23 L234.80,439.23 L235.00,439.23 L235.20,439.23 L235.40,439.23 L235.60,439.23 L235.80,439.23 L236.00,439.23 L236.20,439.23 L236.40,439.23 L236.60,439.23 L236.80,439.23 L237.00,439.23 L237.20,439.23 L237.40,439.23 L237.60,439.23 L237.80,439.23 L238.00,439.23 L238.20,439.23 L238.40,439.23 L238.60,439.23 L238.80,439.23 L239.00,439.23 L239.20,439.23 L239.40,439.23 L239.60,439.23 L239.80,439.23 L240.00,439.23 L240.20,439.23 L240.40,439.23 L240.60,439.23 L240.80,439.23 L241.00,439.23 L241.20,439.23 L241.40,439.23 L241.60,439.23 L241.80,439.23 L242.00,439.23 L242.20,439.23 L242.40,439.23 L242.60,439.23 L242.80,439.23 L243.00,439.23 L243.20,439.23 L243.40,439.23 L243.60,439.23 L243.80,439.23 L244.00,439.23 L244.20,439.23 L244.40,439.23 L244.60,439.23 L244.80,439.23 L245.00,439.23 L245.20,439.23 L245.40,439.23 L245.60,439.23 L245.80,439.23 L246.00,439.23 L246.20,439.23 L246.40,439.23 L246.60,439.23 L246.80,439.23 L247.00,439.23 L247.20,439.23 L247.40,439.23 L247.60,439.23 L247.80,439.23 L248.00,439.23 L248.20,439.23 L248.40,439.23 L248.60,439.23 L248.80,439.23 L249.00,439.23 L249.20,439.23 L249.40,439.23 L249.60,439.23 L249.80,439.23 L250.00,439.23 L250.20,439.23 L250.40,439.23 L250.60,439.23 L250.80,439.23 L251.00,439.23 L251.20,439.23 L251.40,439.23 L251.60,439.23 L251.80,439.23 L252.00,439.23 L252.20,439.23 L252.40,439.23 L252.60,439.23 L252.80,439.23 L253.00,439.23 L253.20,439.23 L253.40,439.23 L253.60,439.23 L253.80,439.23 L254.00,439.23 L254.20,439.23 L254.40,439.23 L254.60,439.23 L254.80,439.23 L255.00,439.23 L255.20,439.23 L255.40,439.23 L255.60,439.23 L255.80,439.23 L256.00,439.23 L256.20,439.23 L256.40,439.23 L256.60,439.23 L256.80,439.23 L257.00,439.23 L257.20,439.23 L257.40,439.23 L257.60,439.23 L257.80,439.23 L258.00,439.23 L258.20,439.23 L258.40,439.23 L258.60,439.23 L258.80,439.23 L259.00,439.23 L259.20,439.23 L259.40,439.23 L259.60,439.23 L259.80,439.23 L260.00,439.23 L260.20,439.23 L260.40,439.23 L260.60,439.23 L260.80,439.23 L261.00,439.23 L261.20,439.23 L261.40,439.23 L261.60,439.23 L261.80,439.22 L262.00,439.22 L262.20,439.22 L262.40,439.21 L262.60,439.20 L262.80,439.20 L263.00,439.19 L263.20,439.17 L263.40,439.15 L263.60,439.08 L263.80,438.83 L264.00,438.04 L264.20,436.24 L264.40,433.35 L264.60,430.38 L264.65,429.84 L264.80,429.08 L264.95,429.84 L265.00,430.38 L265.20,433.35 L265.40,436.24 L265.60,438.04 L265.80,438.83 L266.00,439.08 L266.20,439.15 L266.40,439.17 L266.60,439.19 L266.80,439.20 L267.00,439.20 L267.20,439.21 L267.40,439.22 L267.60,439.22 L267.80,439.22 L268.00,439.23 L268.20,439.23 L268.40,439.23 L268.60,439.23 L268.80,439.23 L269.00,439.23 L269.20,439.23 L269.40,439.23 L269.60,439.23 L269.80,439.23 L270.00,439.23 L270.20,439.23 L270.40,439.23 L270.60,439.23 L270.80,439.23 L271.00,439.23 L271.20,439.23 L271.40,439.23 L271.60,439.23 L271.80,439.23 L272.00,439.23 L272.20,439.23 L272.40,439.23 L272.60,439.23 L272.80,439.23 L273.00,439.23 L273.20,439.23 L273.40,439.23 L273.60,439.23 L273.80,439.23 L274.00,439.23 L274.20,439.23 L274.40,439.23 L274.60,439.23 L274.80,439.23 L275.00,439.23 L275.20,439.23 L275.40,439.23 L275.60,439.23 L275.80,439.23 L276.00,439.23 L276.20,439.23 L276.40,439.23 L276.60,439.23 L276.80,439.23 L277.00,439.23 L277.20,439.23 L277.40,439.23 L277.60,439.23 L277.80,439.23 L278.00,439.23 L278.20,439.23 L278.40,439.23 L278.60,439.23 L278.80,439.23 L279.00,439.23 L279.20,439.23 L279.40,439.23 L279.60,439.23 L279.80,439.23 L280.00,439.23 L280.20,439.23 L280.40,439.23 L280.60,439.23 L280.80,439.23 L281.00,439.23 L281.20,439.23 L281.40,439.23 L281.60,439.23 L281.80,439.23 L282.00,439.23 L282.20,439.23 L282.40,439.23 L282.60,439.23 L282.80,439.23 L283.00,439.23 L283.20,439.23 L283.40,439.23 L283.60,439.23 L283.80,439.23 L284.00,439.23 L284.20,439.23 L284.40,439.23 L284.60,439.23 L284.80,439.23 L285.00,439.23 L285.20,439.23 L285.40,439.23 L285.60,439.23 L285.80,439.23 L286.00,439.23 L286.20,439.23 L286.40,439.23 L286.60,439.23 L286.80,439.23 L287.00,439.23 L287.20,439.23 L287.40,439.23 L287.60,439.23 L287.80,439.23 L288.00,439.23 L288.20,439.23 L288.40,439.22 L288.60,439.22 L288.80,439.21 L289.00,439.21 L289.20,439.20 L289.40,439.19 L289.60,439.17 L289.80,439.16 L290.00,439.14 L290.20,439.12 L290.40,439.08 L290.60,438.92 L290.80,438.22 L291.00,435.97 L291.20,431.30 L291.40,425.61 L291.45,424.48 L291.60,422.90 L291.75,424.48 L291.80,425.61 L292.00,431.30 L292.20,435.97 L292.40,438.22 L292.60,437.36 L292.80,433.93 L293.00,428.37 L293.15,424.48 L293.20,423.62 L293.30,422.90 L293.40,423.62 L293.45,424.48 L293.60,428.37 L293.80,433.93 L294.00,437.36 L294.20,438.69 L294.40,439.03 L294.60,439.11 L294.80,439.13 L295.00,439.15 L295.20,439.17 L295.40,439.18 L295.60,439.19 L295.80,439.20 L296.00,439.21 L296.20,439.22 L296.40,439.22 L296.60,439.22 L296.80,439.23 L297.00,439.23 L297.20,439.23 L297.40,439.23 L297.60,439.23 L297.80,439.23 L298.00,439.23 L298.20,439.23 L298.40,439.23 L298.60,439.23 L298.80,439.23 L299.00,439.23 L299.20,439.23 L299.40,439.23 L299.60,439.23 L299.80,439.23 L300.00,439.23 L300.20,439.23 L300.40,439.23 L300.60,439.23 L300.80,439.23 L301.00,439.23 L301.20,439.23 L301.40,439.23 L301.60,439.23 L301.80,439.23 L302.00,439.23 L302.20,439.23 L302.40,439.23 L302.60,439.23 L302.80,439.23 L303.00,439.23 L303.20,439.23 L303.40,439.23 L303.60,439.23 L303.80,439.23 L304.00,439.23 L304.20,439.23 L304.40,439.23 L304.60,439.23 L304.80,439.23 L305.00,439.23 L305.20,439.23 L305.40,439.23 L305.60,439.23 L305.80,439.23 L306.00,439.23 L306.20,439.23 L306.40,439.22 L306.60,439.22 L306.80,439.22 L307.00,439.21 L307.20,439.20 L307.40,439.20 L307.60,439.19 L307.80,439.17 L308.00,439.14 L308.20,439.03 L308.40,438.62 L308.60,437.55 L308.80,435.48 L309.00,432.77 L309.15,431.09 L309.20,430.73 L309.30,430.44 L309.40,430.73 L309.45,431.09 L309.60,432.77 L309.80,435.48 L310.00,437.55 L310.20,438.62 L310.40,439.03 L310.60,439.14 L310.80,439.17 L311.00,439.19 L311.20,439.20 L311.40,439.20 L311.60,439.21 L311.80,439.22 L312.00,439.22 L312.20,439.22 L312.40,439.23 L312.60,439.23 L312.80,439.23 L313.00,439.23 L313.20,439.23 L313.40,439.23 L313.60,439.23 L313.80,439.23 L314.00,439.23 L314.20,439.23 L314.40,439.23 L314.60,439.23 L314.80,439.23 L315.00,439.23 L315.20,439.23 L315.40,439.23 L315.60,439.23 L315.80,439.23 L316.00,439.23 L316.20,439.23 L316.40,439.23 L316.60,439.23 L316.80,439.23 L317.00,439.23 L317.20,439.23 L317.40,439.23 L317.60,439.23 L317.80,439.23 L318.00,439.23 L318.20,439.23 L318.40,439.23 L318.60,439.23 L318.80,439.23 L319.00,439.23 L319.20,439.23 L319.40,439.23 L319.60,439.23 L319.80,439.23 L320.00,439.23 L320.20,439.23 L320.40,439.23 L320.60,439.23 L320.80,439.23 L321.00,439.23 L321.20,439.23 L321.40,439.23 L321.60,439.23 L321.80,439.23 L322.00,439.23 L322.20,439.23 L322.40,439.23 L322.60,439.23 L322.80,439.23 L323.00,439.23 L323.20,439.23 L323.40,439.23 L323.60,439.23 L323.80,439.23 L324.00,439.23 L324.20,439.23 L324.40,439.23 L324.60,439.23 L324.80,439.23 L325.00,439.23 L325.20,439.23 L325.40,439.23 L325.60,439.23 L325.80,439.23 L326.00,439.23 L326.20,439.23 L326.40,439.23 L326.60,439.23 L326.80,439.23 L327.00,439.23 L327.20,439.23 L327.40,439.23 L327.60,439.23 L327.80,439.23 L328.00,439.23 L328.20,439.23 L328.40,439.23 L328.60,439.23 L328.80,439.23 L329.00,439.23 L329.20,439.23 L329.40,439.23 L329.60,439.23 L329.80,439.23 L330.00,439.23 L330.20,439.23 L330.40,439.23 L330.60,439.23 L330.80,439.23 L331.00,439.23 L331.20,439.23 L331.40,439.23 L331.60,439.23 L331.80,439.23 L332.00,439.23 L332.20,439.23 L332.40,439.23 L332.60,439.23 L332.80,439.23 L333.00,439.23 L333.20,439.23 L333.40,439.23 L333.60,439.23 L333.80,439.23 L334.00,439.23 L334.20,439.23 L334.40,439.23 L334.60,439.23 L334.80,439.23 L335.00,439.23 L335.20,439.23 L335.40,439.23 L335.60,439.23 L335.80,439.23 L336.00,439.23 L336.20,439.23 L336.40,439.23 L336.60,439.23 L336.80,439.23 L337.00,439.23 L337.20,439.23 L337.40,439.23 L337.60,439.23 L337.80,439.23 L338.00,439.23 L338.20,439.22 L338.40,439.22 L338.60,439.22 L338.80,439.22 L339.00,439.22 L339.20,439.22 L339.40,439.22 L339.60,439.22 L339.80,439.21 L340.00,439.21 L340.20,439.21 L340.40,439.21 L340.60,439.20 L340.80,439.20 L341.00,439.20 L341.20,439.19 L341.40,439.19 L341.60,439.18 L341.80,439.18 L342.00,439.17 L342.20,439.17 L342.40,439.16 L342.60,439.15 L342.80,439.14 L343.00,439.13 L343.20,439.12 L343.40,439.11 L343.60,439.10 L343.80,439.09 L344.00,439.08 L344.20,439.06 L344.40,439.05 L344.60,439.03 L344.80,439.02 L345.00,439.00 L345.20,438.98 L345.40,438.96 L345.60,438.94 L345.80,438.91 L346.00,438.89 L346.20,438.87 L346.40,438.84 L346.60,438.81 L346.80,438.78 L347.00,438.75 L347.20,438.72 L347.40,438.69 L347.60,438.66 L347.80,438.62 L348.00,438.59 L348.20,438.55 L348.40,438.51 L348.60,438.47 L348.80,438.43 L349.00,438.39 L349.20,438.35 L349.40,438.31 L349.60,438.27 L349.80,438.23 L350.00,438.19 L350.20,438.15 L350.40,438.10 L350.60,438.06 L350.80,438.02 L351.00,437.98 L351.20,437.94 L351.40,437.90 L351.60,437.87 L351.80,437.83 L352.00,437.79 L352.20,437.76 L352.40,437.73 L352.60,437.70 L352.80,437.67 L353.00,437.64 L353.20,437.61 L353.40,437.59 L353.60,437.57 L353.80,437.55 L354.00,437.53 L354.20,437.52 L354.40,437.51 L354.60,437.50 L354.80,437.49 L354.85,437.49 L355.00,437.49 L355.15,437.49 L355.20,437.49 L355.40,437.50 L355.60,437.51 L355.80,437.52 L356.00,437.53 L356.20,437.55 L356.40,437.57 L356.60,437.59 L356.80,437.61 L357.00,437.64 L357.20,437.67 L357.40,437.70 L357.60,437.73 L357.80,437.76 L358.00,437.79 L358.20,437.83 L358.40,437.87 L358.60,437.90 L358.80,437.94 L359.00,437.98 L359.20,438.02 L359.40,438.06 L359.60,438.10 L359.80,438.15 L360.00,438.19 L360.20,438.23 L360.40,438.27 L360.60,438.31 L360.80,438.35 L361.00,438.39 L361.20,438.43 L361.40,438.47 L361.60,438.51 L361.80,438.55 L362.00,438.59 L362.20,438.62 L362.40,438.66 L362.60,438.69 L362.80,438.72 L363.00,438.75 L363.20,438.78 L363.40,438.81 L363.60,438.84 L363.80,438.87 L364.00,438.89 L364.20,438.91 L364.40,438.94 L364.60,438.96 L364.80,438.98 L365.00,439.00 L365.20,439.02 L365.40,439.03 L365.60,439.05 L365.80,439.06 L366.00,439.08 L366.20,439.09 L366.40,439.10 L366.60,439.11 L366.80,439.12 L367.00,439.13 L367.20,439.14 L367.40,439.15 L367.60,439.16 L367.80,439.17 L368.00,439.17 L368.20,439.18 L368.40,439.18 L368.60,439.19 L368.80,439.19 L369.00,439.20 L369.20,439.20 L369.40,439.20 L369.60,439.21 L369.80,439.21 L370.00,439.21 L370.20,439.21 L370.40,439.22 L370.60,439.22 L370.80,439.22 L371.00,439.22 L371.20,439.22 L371.40,439.22 L371.60,439.22 L371.80,439.22 L372.00,439.23 L372.20,439.23 L372.40,439.23 L372.60,439.23 L372.80,439.23 L373.00,439.23 L373.20,439.23 L373.40,439.23 L373.60,439.23 L373.80,439.23 L374.00,439.23 L374.20,439.22 L374.40,439.22 L374.60,439.20 L374.80,439.17 L375.00,439.11 L375.20,438.99 L375.40,438.77 L375.60,438.40 L375.80,437.85 L376.00,437.08 L376.20,436.14 L376.40,435.13 L376.60,434.22 L376.80,433.57 L376.85,433.47 L377.00,433.34 L377.15,433.47 L377.20,433.57 L377.40,434.22 L377.60,435.13 L377.80,436.14 L378.00,437.08 L378.20,437.85 L378.40,438.40 L378.60,438.77 L378.80,438.99 L379.00,439.11 L379.20,439.17 L379.40,439.20 L379.60,439.22 L379.80,439.22 L380.00,439.23 L380.20,439.23 L380.40,439.23 L380.60,439.23 L380.80,439.23 L381.00,439.23 L381.20,439.23 L381.40,439.23 L381.60,439.23 L381.80,439.23 L382.00,439.23 L382.20,439.23 L382.40,439.23 L382.60,439.23 L382.80,439.23 L383.00,439.23 L383.20,439.23 L383.40,439.23 L383.60,439.23 L383.80,439.23 L384.00,439.23 L384.20,439.23 L384.40,439.23 L384.60,439.23 L384.80,439.23 L385.00,439.23 L385.20,439.23 L385.40,439.23 L385.60,439.23 L385.80,439.23 L386.00,439.23 L386.20,439.23 L386.40,439.23 L386.60,439.23 L386.80,439.23 L387.00,439.23 L387.20,439.23 L387.40,439.23 L387.60,439.23 L387.80,439.23 L388.00,439.22 L388.20,439.22 L388.40,439.21 L388.60,439.20 L388.80,439.19 L389.00,439.17 L389.20,439.13 L389.40,439.09 L389.60,439.03 L389.80,438.96 L390.00,438.87 L390.20,438.76 L390.40,438.63 L390.60,438.50 L390.80,438.35 L391.00,438.21 L391.20,438.07 L391.40,437.95 L391.60,437.86 L391.80,437.80 L391.85,437.79 L392.00,437.78 L392.15,437.79 L392.20,437.80 L392.40,437.86 L392.60,437.95 L392.80,438.07 L393.00,438.21 L393.20,438.35 L393.40,438.50 L393.60,438.63 L393.80,438.76 L394.00,438.87 L394.20,438.96 L394.40,439.03 L394.60,439.09 L394.80,439.13 L395.00,439.17 L395.20,439.19 L395.40,439.20 L395.60,439.21 L395.80,439.22 L396.00,439.22 L396.20,439.23 L396.40,439.23 L396.60,439.23 L396.80,439.23 L397.00,439.23 L397.20,439.23 L397.40,439.23 L397.60,439.23 L397.80,439.23 L398.00,439.23" fill="none" stroke="url(#cg)" stroke-width="0.9"/>
<line x1="67" y1="303.5" x2="70.5" y2="303.5" stroke="#666" stroke-width="0.7"/>
<text x="65" y="305.1" font-size="4.2" text-anchor="end" fill="#444">15000</text>
<line x1="67" y1="350" x2="70.5" y2="350" stroke="#666" stroke-width="0.7"/>
<text x="65" y="351.6" font-size="4.2" text-anchor="end" fill="#444">10000</text>
<line x1="67" y1="396.5" x2="70.5" y2="396.5" stroke="#666" stroke-width="0.7"/>
<text x="65" y="398.1" font-size="4.2" text-anchor="end" fill="#444">5000</text>
<line x1="67" y1="442.5" x2="70.5" y2="442.5" stroke="#666" stroke-width="0.7"/>
<text x="65" y="444.1" font-size="4.2" text-anchor="end" fill="#444">0</text>
<line x1="78.70" y1="442.5" x2="78.70" y2="446.5" stroke="#555" stroke-width="0.6"/>
<line x1="82.46" y1="442.5" x2="82.46" y2="444.5" stroke="#555" stroke-width="0.6"/>
<line x1="86.22" y1="442.5" x2="86.22" y2="444.5" stroke="#555" stroke-width="0.6"/>
<line x1="89.98" y1="442.5" x2="89.98" y2="444.5" stroke="#555" stroke-width="0.6"/>
<line x1="93.74" y1="442.5" x2="93.74" y2="444.5" stroke="#555" stroke-width="0.6"/>
<line x1="97.50" y1="442.5" x2="97.50" y2="444.5" stroke="#555" stroke-width="0.6"/>
<line x1="101.26" y1="442.5" x2="101.26" y2="444.5" stroke="#555" stroke-width="0.6"/>
<line x1="105.02" y1="442.5" x2="105.02" y2="444.5" stroke="#555" stroke-width="0.6"/>
<line x1="108.78" y1="442.5" x2="108.78" y2="444.5" stroke="#555" stroke-width="0.6"/>
<line x1="112.54" y1="442.5" x2="112.54" y2="444.5" stroke="#555" stroke-width="0.6"/>
<line x1="116.30" y1="442.5" x2="116.30" y2="446.5" stroke="#555" stroke-width="0.6"/>
<line x1="120.06" y1="442.5" x2="120.06" y2="444.5" stroke="#555" stroke-width="0.6"/>
<line x1="123.82" y1="442.5" x2="123.82" y2="444.5" stroke="#555" stroke-width="0.6"/>
<line x1="127.58" y1="442.5" x2="127.58" y2="444.5" stroke="#555" stroke-width="0.6"/>
<line x1="131.34" y1="442.5" x2="131.34" y2="444.5" stroke="#555" stroke-width="0.6"/>
<line x1="135.10" y1="442.5" x2="135.10" y2="444.5" stroke="#555" stroke-width="0.6"/>
<line x1="138.86" y1="442.5" x2="138.86" y2="444.5" stroke="#555" stroke-width="0.6"/>
<line x1="142.62" y1="442.5" x2="142.62" y2="444.5" stroke="#555" stroke-width="0.6"/>
<line x1="146.38" y1="442.5" x2="146.38" y2="444.5" stroke="#555" stroke-width="0.6"/>
<line x1="150.14" y1="442.5" x2="150.14" y2="444.5" stroke="#555" stroke-width="0.6"/>
<line x1="153.90" y1="442.5" x2="153.90" y2="446.5" stroke="#555" stroke-width="0.6"/>
<line x1="157.66" y1="442.5" x2="157.66" y2="444.5" stroke="#555" stroke-width="0.6"/>
<line x1="161.42" y1="442.5" x2="161.42" y2="444.5" stroke="#555" stroke-width="0.6"/>
<line x1="165.18" y1="442.5" x2="165.18" y2="444.5" stroke="#555" stroke-width="0.6"/>
<line x1="168.94" y1="442.5" x2="168.94" y2="444.5" stroke="#555" stroke-width="0.6"/>
<line x1="172.70" y1="442.5" x2="172.70" y2="444.5" stroke="#555" stroke-width="0.6"/>
<line x1="176.46" y1="442.5" x2="176.46" y2="444.5" stroke="#555" stroke-width="0.6"/>
<line x1="180.22" y1="442.5" x2="180.22" y2="444.5" stroke="#555" stroke-width="0.6"/>
<line x1="183.98" y1="442.5" x2="183.98" y2="444.5" stroke="#555" stroke-width="0.6"/>
<line x1="187.74" y1="442.5" x2="187.74" y2="444.5" stroke="#555" stroke-width="0.6"/>
<line x1="191.50" y1="442.5" x2="191.50" y2="446.5" stroke="#555" stroke-width="0.6"/>
<line x1="195.26" y1="442.5" x2="195.26" y2="444.5" stroke="#555" stroke-width="0.6"/>
<line x1="199.02" y1="442.5" x2="199.02" y2="444.5" stroke="#555" stroke-width="0.6"/>
<line x1="202.78" y1="442.5" x2="202.78" y2="444.5" stroke="#555" stroke-width="0.6"/>
<line x1="206.54" y1="442.5" x2="206.54" y2="444.5" stroke="#555" stroke-width="0.6"/>
<line x1="210.30" y1="442.5" x2="210.30" y2="444.5" stroke="#555" stroke-width="0.6"/>
<line x1="214.06" y1="442.5" x2="214.06" y2="444.5" stroke="#555" stroke-width="0.6"/>
<line x1="217.82" y1="442.5" x2="217.82" y2="444.5" stroke="#555" stroke-width="0.6"/>
<line x1="221.58" y1="442.5" x2="221.58" y2="444.5" stroke="#555" stroke-width="0.6"/>
<line x1="225.34" y1="442.5" x2="225.34" y2="444.5" stroke="#555" stroke-width="0.6"/>
<line x1="229.10" y1="442.5" x2="229.10" y2="446.5" stroke="#555" stroke-width="0.6"/>
<line x1="232.86" y1="442.5" x2="232.86" y2="444.5" stroke="#555" stroke-width="0.6"/>
<line x1="236.62" y1="442.5" x2="236.62" y2="444.5" stroke="#555" stroke-width="0.6"/>
<line x1="240.38" y1="442.5" x2="240.38" y2="444.5" stroke="#555" stroke-width="0.6"/>
<line x1="244.14" y1="442.5" x2="244.14" y2="444.5" stroke="#555" stroke-width="0.6"/>
<line x1="247.90" y1="442.5" x2="247.90" y2="444.5" stroke="#555" stroke-width="0.6"/>
<line x1="251.66" y1="442.5" x2="251.66" y2="444.5" stroke="#555" stroke-width="0.6"/>
<line x1="255.42" y1="442.5" x2="255.42" y2="444.5" stroke="#555" stroke-width="0.6"/>
<line x1="259.18" y1="442.5" x2="259.18" y2="444.5" stroke="#555" stroke-width="0.6"/>
<line x1="262.94" y1="442.5" x2="262.94" y2="444.5" stroke="#555" stroke-width="0.6"/>
<line x1="266.70" y1="442.5" x2="266.70" y2="446.5" stroke="#555" stroke-width="0.6"/>
<line x1="270.46" y1="442.5" x2="270.46" y2="444.5" stroke="#555" stroke-width="0.6"/>
<line x1="274.22" y1="442.5" x2="274.22" y2="444.5" stroke="#555" stroke-width="0.6"/>
<line x1="277.98" y1="442.5" x2="277.98" y2="444.5" stroke="#555" stroke-width="0.6"/>
<line x1="281.74" y1="442.5" x2="281.74" y2="444.5" stroke="#555" stroke-width="0.6"/>
<line x1="285.50" y1="442.5" x2="285.50" y2="444.5" stroke="#555" stroke-width="0.6"/>
<line x1="289.26" y1="442.5" x2="289.26" y2="444.5" stroke="#555" stroke-width="0.6"/>
<line x1="293.02" y1="442.5" x2="293.02" y2="444.5" stroke="#555" stroke-width="0.6"/>
<line x1="296.78" y1="442.5" x2="296.78" y2="444.5" stroke="#555" stroke-width="0.6"/>
<line x1="300.54" y1="442.5" x2="300.54" y2="444.5" stroke="#555" stroke-width="0.6"/>
<line x1="304.30" y1="442.5" x2="304.30" y2="446.5" stroke="#555" stroke-width="0.6"/>
<line x1="308.06" y1="442.5" x2="308.06" y2="444.5" stroke="#555" stroke-width="0.6"/>
<line x1="311.82" y1="442.5" x2="311.82" y2="444.5" stroke="#555" stroke-width="0.6"/>
<line x1="315.58" y1="442.5" x2="315.58" y2="444.5" stroke="#555" stroke-width="0.6"/>
<line x1="319.34" y1="442.5" x2="319.34" y2="444.5" stroke="#555" stroke-width="0.6"/>
<line x1="323.10" y1="442.5" x2="323.10" y2="444.5" stroke="#555" stroke-width="0.6"/>
<line x1="326.86" y1="442.5" x2="326.86" y2="444.5" stroke="#555" stroke-width="0.6"/>
<line x1="330.62" y1="442.5" x2="330.62" y2="444.5" stroke="#555" stroke-width="0.6"/>
<line x1="334.38" y1="442.5" x2="334.38" y2="444.5" stroke="#555" stroke-width="0.6"/>
<line x1="338.14" y1="442.5" x2="338.14" y2="444.5" stroke="#555" stroke-width="0.6"/>
<line x1="341.90" y1="442.5" x2="341.90" y2="446.5" stroke="#555" stroke-width="0.6"/>
<line x1="345.66" y1="442.5" x2="345.66" y2="444.5" stroke="#555" stroke-width="0.6"/>
<line x1="349.42" y1="442.5" x2="349.42" y2="444.5" stroke="#555" stroke-width="0.6"/>
<line x1="353.18" y1="442.5" x2="353.18" y2="444.5" stroke="#555" stroke-width="0.6"/>
<line x1="356.94" y1="442.5" x2="356.94" y2="444.5" stroke="#555" stroke-width="0.6"/>
<line x1="360.70" y1="442.5" x2="360.70" y2="444.5" stroke="#555" stroke-width="0.6"/>
<line x1="364.46" y1="442.5" x2="364.46" y2="444.5" stroke="#555" stroke-width="0.6"/>
<line x1="368.22" y1="442.5" x2="368.22" y2="444.5" stroke="#555" stroke-width="0.6"/>
<line x1="371.98" y1="442.5" x2="371.98" y2="444.5" stroke="#555" stroke-width="0.6"/>
<line x1="375.74" y1="442.5" x2="375.74" y2="444.5" stroke="#555" stroke-width="0.6"/>
<line x1="379.50" y1="442.5" x2="379.50" y2="446.5" stroke="#555" stroke-width="0.6"/>
<line x1="383.26" y1="442.5" x2="383.26" y2="444.5" stroke="#555" stroke-width="0.6"/>
<line x1="387.02" y1="442.5" x2="387.02" y2="444.5" stroke="#555" stroke-width="0.6"/>
<line x1="390.78" y1="442.5" x2="390.78" y2="444.5" stroke="#555" stroke-width="0.6"/>
<text x="78.7" y="451.5" font-size="4.2" text-anchor="middle" fill="#555">20</text>
<text x="116.3" y="451.5" font-size="4.2" text-anchor="middle" fill="#555">30</text>
<text x="153.9" y="451.5" font-size="4.2" text-anchor="middle" fill="#555">40</text>
<text x="191.5" y="451.5" font-size="4.2" text-anchor="middle" fill="#555">50</text>
<text x="229.1" y="451.5" font-size="4.2" text-anchor="middle" fill="#555">60</text>
<text x="266.7" y="451.5" font-size="4.2" text-anchor="middle" fill="#555">70</text>
<text x="304.3" y="451.5" font-size="4.2" text-anchor="middle" fill="#555">80</text>
<text x="341.9" y="451.5" font-size="4.2" text-anchor="middle" fill="#555">90</text>
<text x="379.5" y="451.5" font-size="4.2" text-anchor="middle" fill="#555">100</text>
<text x="245" y="459.5" font-size="4.2" text-anchor="middle" fill="#555">Position [°2Theta] (Copper (Cu))</text>
<text x="31" y="298.5" font-size="4.4" fill="#777">Counts</text>
<rect x="71" y="370.5" width="2" height="2" fill="#fff"/><rect x="397" y="370.5" width="2" height="2" fill="#fff"/>
</svg>

<div class="a" style="left:418px;top:53px;width:438px;height:417px;background:#e1edfc"></div>
<div class="a" style="left:418px;top:60px;width:2px;height:410px;background:#b9c4d0"></div>
<div class="a" style="left:418px;top:53px;width:438px;height:11px;background:#ebf2fb"></div>
<div class="t" style="left:420px;top:60px;font-size:3.7px;line-height:4px;font-weight:bold;color:#1a2030">Pattern list</div>
<div class="a" style="left:420px;top:64px;width:272px;height:1px;background:#9aa8b8"></div>
<div class="a" style="left:420px;top:65px;width:219px;height:8px;background:#d9e5f3"></div>
<div class="a" style="left:639px;top:65px;width:51px;height:8px;background:#e6eef8"></div>
<div class="a" style="left:421px;top:66px;width:18px;height:6px;border:1px solid #b8c8dc;background:#e4ecf6;font-size:3.4px;line-height:4px;color:#4a6aa0;white-space:nowrap;overflow:hidden;padding-left:.5px">Pattern List</div>
<div class="a" style="left:441px;top:66px;width:8px;height:6px;border:1px solid #b8c8dc;background:#e4ecf6;font-size:3.4px;line-height:4px;color:#222;white-space:nowrap;overflow:hidden;padding-left:.5px">Σ(Å)</div>
<div class="a" style="left:450px;top:66px;width:7px;height:6px;border:1px solid #b8c8dc;background:#e4ecf6;font-size:3.4px;line-height:4px;color:#222;white-space:nowrap;overflow:hidden;padding-left:.5px">Ł.Λ</div>
<div class="a" style="left:458px;top:66px;width:15px;height:6px;border:1px solid #b8c8dc;background:#e4ecf6;font-size:3.4px;line-height:4px;color:#102a70;white-space:nowrap;overflow:hidden;padding-left:.5px">Peak List</div>
<div class="a" style="left:474px;top:66px;width:29px;height:6px;border:1px solid #b8c8dc;background:#e4ecf6;font-size:3.4px;line-height:4px;color:#2a4a90;white-space:nowrap;overflow:hidden;padding-left:.5px">Anchor Scan Data</div>
<div class="a" style="left:504px;top:66px;width:23px;height:6px;border:1px solid #b8c8dc;background:#e4ecf6;font-size:3.4px;line-height:4px;color:#2a4a90;white-space:nowrap;overflow:hidden;padding-left:.5px">Scan(s)/Phase(s)</div>
<div class="a" style="left:528px;top:66px;width:31px;height:6px;border:1px solid #b8c8dc;background:#e4ecf6;font-size:3.4px;line-height:4px;color:#2a4a90;white-space:nowrap;overflow:hidden;padding-left:.5px">Reference Patterns</div>
<div class="a" style="left:560px;top:66px;width:22px;height:6px;border:1px solid #b8c8dc;background:#e4ecf6;font-size:3.4px;line-height:4px;color:#2a4a90;white-space:nowrap;overflow:hidden;padding-left:.5px">Object Inspector</div>
<div class="a" style="left:583px;top:66px;width:20px;height:6px;border:1px solid #b8c8dc;background:#e4ecf6;font-size:3.4px;line-height:4px;color:#2a4a90;white-space:nowrap;overflow:hidden;padding-left:.5px">Pattern List</div>
<div class="a" style="left:603px;top:66px;width:35px;height:6px;border:1px solid #b8c8dc;background:#e4ecf6;font-size:3.4px;line-height:4px;color:#2a4a90;white-space:nowrap;overflow:hidden;padding-left:.5px">Crystal structure</div>
<div class="a" style="left:420px;top:73px;width:271px;height:6px;background:#eef6f4;border-bottom:1px solid #c8d4dc"></div>
<div class="a" style="left:421px;top:73px;font-size:3.6px;line-height:6px;color:#333;white-space:nowrap">No.</div>
<div class="a" style="left:436px;top:73px;width:1px;height:12px;background:#c8b8b8"></div>
<div class="a" style="left:437px;top:73px;font-size:3.6px;line-height:6px;color:#333;white-space:nowrap">Vis.</div>
<div class="a" style="left:447.7px;top:73px;width:1px;height:12px;background:#c8b8b8"></div>
<div class="a" style="left:448.7px;top:73px;font-size:3.6px;line-height:6px;color:#333;white-space:nowrap">Name</div>
<div class="a" style="left:499.3px;top:73px;width:1px;height:12px;background:#c8b8b8"></div>
<div class="a" style="left:500.3px;top:73px;font-size:3.6px;line-height:6px;color:#333;white-space:nowrap">Score</div>
<div class="a" style="left:531px;top:73px;width:1px;height:12px;background:#c8b8b8"></div>
<div class="a" style="left:532px;top:73px;font-size:3.6px;line-height:6px;color:#333;white-space:nowrap">Pattern</div>
<div class="a" style="left:561.7px;top:73px;width:1px;height:12px;background:#c8b8b8"></div>
<div class="a" style="left:562.7px;top:73px;font-size:3.6px;line-height:6px;color:#333;white-space:nowrap">Scale</div>
<div class="a" style="left:592.7px;top:73px;width:1px;height:12px;background:#c8b8b8"></div>
<div class="a" style="left:593.7px;top:73px;font-size:3.6px;line-height:6px;color:#333;white-space:nowrap">Matched Lines</div>
<div class="a" style="left:624.3px;top:73px;width:1px;height:12px;background:#c8b8b8"></div>
<div class="a" style="left:625.3px;top:73px;font-size:3.6px;line-height:6px;color:#333;white-space:nowrap">Chem. Formula</div>
<div class="a" style="left:655.7px;top:73px;width:1px;height:12px;background:#c8b8b8"></div>
<div class="a" style="left:656.7px;top:73px;font-size:3.6px;line-height:6px;color:#333;white-space:nowrap">Compound Name</div>
<div class="a" style="left:687.7px;top:73px;width:1px;height:12px;background:#c8b8b8"></div>
<div class="a" style="left:420px;top:79px;width:271px;height:6px;background:#f01010"></div>
<div class="a" style="left:688px;top:73px;width:3px;height:6px;background:#e8eef4;border:1px solid #bcc6d0"></div>
<div class="a" style="left:436px;top:79px;width:1px;height:6px;background:#f89090"></div>
<div class="a" style="left:447.7px;top:79px;width:1px;height:6px;background:#f89090"></div>
<div class="a" style="left:499.3px;top:79px;width:1px;height:6px;background:#f89090"></div>
<div class="a" style="left:531px;top:79px;width:1px;height:6px;background:#f89090"></div>
<div class="a" style="left:561.7px;top:79px;width:1px;height:6px;background:#f89090"></div>
<div class="a" style="left:592.7px;top:79px;width:1px;height:6px;background:#f89090"></div>
<div class="a" style="left:624.3px;top:79px;width:1px;height:6px;background:#f89090"></div>
<div class="a" style="left:655.7px;top:79px;width:1px;height:6px;background:#f89090"></div>
<div class="a" style="left:687.7px;top:79px;width:1px;height:6px;background:#f89090"></div>
<div class="a" style="left:420px;top:79px;width:16px;height:6px;background:#d81414"></div>
<div class="a" style="left:440px;top:80px;width:4px;height:4px;background:#f4c8c8;border:1px solid #f8f0f0"></div>
<div class="a" style="left:690px;top:65px;width:2px;height:405px;background:#d0d9e3"></div>
<div class="a" style="left:695px;top:64px;width:158px;height:1px;background:#a9b6c4"></div>
<div class="a" style="left:695px;top:70px;width:158px;height:1px;background:#a9b6c4"></div>
<div class="a" style="left:691px;top:60px;width:3px;height:4px;background:#666"></div>
<div class="t" style="left:696px;top:61px;font-size:3.8px;line-height:5px;color:#101828;font-weight:bold">Object Inspector</div>
<div class="t" style="left:696px;top:66px;font-size:3.7px;line-height:5px;font-weight:bold;color:#1a2030">No object selected</div>
<div class="a" style="left:853px;top:58px;width:3px;height:412px;background:#e6f0fc"></div>
<div class="t" style="left:851px;top:52px;font-size:5px;line-height:6px;color:#445">×</div>
<div class="a" style="left:852px;top:60px;width:3px;height:3px;background:#778"></div>
<div class="a" style="left:421px;top:458px;width:268px;height:10px;background:#e9eef0;border-top:1px solid #f4f6f8"></div>
<div class="a" style="left:685px;top:461px;width:0;height:0;border-top:1.5px solid transparent;border-bottom:1.5px solid transparent;border-left:2px solid #555"></div>
<div class="a" style="left:432px;top:459px;width:137px;height:8px;background:linear-gradient(#c4cdd8,#a4b0c0)"></div>
<div class="a" style="left:425px;top:461px;width:0;height:0;border-top:1.5px solid transparent;border-bottom:1.5px solid transparent;border-right:2px solid #444"></div>
<div class="a" style="left:420px;top:468px;width:272px;height:2px;background:#c8d2dc"></div>
<div class="a" style="left:6px;top:470px;width:850px;height:15px;background:linear-gradient(#c9defb,#bcd6f8)"></div>
<svg class="a" style="left:12px;top:473px" width="11" height="11" viewBox="0 0 11 11"><rect x="0.5" y="1" width="10" height="9" fill="#eef2f8" stroke="#8ea0c0" stroke-width=".8"/><path d="M1 3 H10" stroke="#5a78b0" stroke-width="1.4"/><path d="M2 5.5 H9 M2 7.5 H9" stroke="#9aaac8" stroke-width=".8"/></svg>
<div class="t" style="left:23px;top:473px;font-size:8.6px;line-height:11px;color:#1b2636;transform:scaleX(.9)">Default</div>
<svg class="a" style="left:50px;top:473px" width="11" height="11" viewBox="0 0 11 11"><rect x="0.5" y="1" width="10" height="9" fill="#eef2f8" stroke="#8ea0c0" stroke-width=".8"/><path d="M1 3 H10" stroke="#5a78b0" stroke-width="1.4"/><path d="M2 5.5 H9 M2 7.5 H9" stroke="#9aaac8" stroke-width=".8"/></svg>
<div class="t" style="left:61px;top:473px;font-size:8.6px;line-height:11px;color:#1b2636;transform:scaleX(.9)">IdeAll</div>
<svg class="a" style="left:82px;top:473px" width="11" height="11" viewBox="0 0 11 11"><rect x="0.5" y="1" width="10" height="9" fill="#eef2f8" stroke="#8ea0c0" stroke-width=".8"/><path d="M1 3 H10" stroke="#5a78b0" stroke-width="1.4"/><path d="M2 5.5 H9 M2 7.5 H9" stroke="#9aaac8" stroke-width=".8"/></svg>
<div class="t" style="left:93px;top:473px;font-size:8.6px;line-height:11px;color:#1b2636;transform:scaleX(.9)">IdeCom</div>
<svg class="a" style="left:121px;top:473px" width="11" height="11" viewBox="0 0 11 11"><rect x="0.5" y="1" width="10" height="9" fill="#eef2f8" stroke="#8ea0c0" stroke-width=".8"/><path d="M1 3 H10" stroke="#5a78b0" stroke-width="1.4"/><path d="M2 5.5 H9 M2 7.5 H9" stroke="#9aaac8" stroke-width=".8"/></svg>
<div class="t" style="left:132px;top:473px;font-size:8.6px;line-height:11px;color:#1b2636;transform:scaleX(.9)">IdeMin</div>
<svg class="a" style="left:159px;top:473px" width="11" height="11" viewBox="0 0 11 11"><rect x="0.5" y="1" width="10" height="9" fill="#eef2f8" stroke="#8ea0c0" stroke-width=".8"/><path d="M1 3 H10" stroke="#5a78b0" stroke-width="1.4"/><path d="M2 5.5 H9 M2 7.5 H9" stroke="#9aaac8" stroke-width=".8"/></svg>
<div class="t" style="left:170px;top:473px;font-size:8.6px;line-height:11px;color:#1b2636;transform:scaleX(.9)">MinorMinerals</div>
<svg class="a" style="left:220px;top:473px" width="11" height="11" viewBox="0 0 11 11"><rect x="0.5" y="1" width="10" height="9" fill="#eef2f8" stroke="#8ea0c0" stroke-width=".8"/><path d="M1 3 H10" stroke="#5a78b0" stroke-width="1.4"/><path d="M2 5.5 H9 M2 7.5 H9" stroke="#9aaac8" stroke-width=".8"/></svg>
<div class="t" style="left:231px;top:473px;font-size:8.6px;line-height:11px;color:#1b2636;transform:scaleX(.9)">PrintIdeAll</div>
<div class="a" style="left:268px;top:478px;width:3px;height:1px;background:#7d93ae;"></div><div class="a" style="left:268px;top:480px;width:3px;height:3px;background:#8ea5c2;"></div>
<svg class="a" style="left:276px;top:473px" width="11" height="11" viewBox="0 0 11 11"><path d="M0.5 1 H10.5 L6.5 5.5 V10 L4.5 10.5 V5.5Z" fill="#80c870" stroke="#50a050" stroke-width=".6"/></svg>
<svg class="a" style="left:290px;top:473px" width="11" height="11" viewBox="0 0 11 11"><rect x="0" y="0" width="11" height="11" fill="#f4e4e8"/><path d="M1 10 L5.5 1 L10 10 M3 6.5 H8" fill="none" stroke="#e05050" stroke-width="1.4"/></svg>
<svg class="a" style="left:305px;top:474px" width="11" height="11" viewBox="0 0 11 11"><path d="M0.5 10 L2.5 10 L4 2 L5.5 10 L6.5 10 L8 4 L9.5 10 L10.5 10" fill="none" stroke="#b8c0cc" stroke-width="1.1"/></svg>
<div class="a" style="left:317px;top:478px;width:0;height:0;border-left:2px solid transparent;border-right:2px solid transparent;border-top:2px solid #8a96a6"></div>
<svg class="a" style="left:325px;top:473px" width="11" height="11" viewBox="0 0 11 11"><path d="M5.5 0.5 V8 M1 10 H10 M3 8 H8" stroke="#8a98b0" stroke-width="1.2"/></svg>
<div class="a" style="left:337px;top:478px;width:0;height:0;border-left:2px solid transparent;border-right:2px solid transparent;border-top:2px solid #667"></div>
<div class="a" style="left:342px;top:472px;width:12px;height:12px;background:#f6cc98;"></div>
<svg class="a" style="left:343px;top:473px" width="11" height="11" viewBox="0 0 11 11"><path d="M1 10 L5.5 1.5 L10 10 M3 7 H8" fill="none" stroke="#c07020" stroke-width="1.2"/></svg>
<svg class="a" style="left:358px;top:473px" width="11" height="11" viewBox="0 0 11 11"><path d="M2.5 1 V10 M7.5 1 V10" stroke="#98a8c0" stroke-width="1"/><path d="M1 3 L2.5 1 L4 3 M6 3 L7.5 1 L9 3" fill="none" stroke="#98a8c0" stroke-width=".8"/></svg>
<div class="a" style="left:367px;top:472px;width:25px;height:12px;background:#f6cc98;"></div>
<svg class="a" style="left:369px;top:473px" width="11" height="11" viewBox="0 0 11 11"><path d="M1 2 L5 10 L9 2" fill="none" stroke="#d07020" stroke-width="1.2"/><path d="M1 6 H9" stroke="#e0a040" stroke-width="1"/></svg>
<svg class="a" style="left:381px;top:473px" width="11" height="11" viewBox="0 0 11 11"><path d="M1 1.5 H10 M1 4.5 H10 M1 7.5 H10 M1 10 H10 M3 1 V10 M7 1 V10" stroke="#d08a40" stroke-width=".9"/></svg>
<svg class="a" style="left:393px;top:474px;opacity:0.8" width="11" height="11" viewBox="0 0 11 11"><rect x="0.5" y="0.5" width="9" height="9" fill="#eef2f6" stroke="#a8b2bc" stroke-width=".9"/><path d="M2 3 H8 M2 5.5 H8" stroke="#b8c0ca" stroke-width=".8"/></svg>
<div class="a" style="left:405px;top:478px;width:3px;height:1px;background:#7d93ae;"></div><div class="a" style="left:405px;top:480px;width:3px;height:3px;background:#8ea5c2;"></div>
<div class="a" style="left:856px;top:0;width:7px;height:485px;background:linear-gradient(90deg,#0e3a6c,#0b2a50 55%,#08162a)"></div>
<div class="a" style="left:863px;top:0;width:37px;height:485px;background:#080a0f"></div>
<svg class="a" style="left:875px;top:7px" width="12" height="11" viewBox="0 0 12 11"><path d="M0 1.6 L5 0.9 V5 H0Z M6 0.8 L12 0 V5 H6Z M0 6 H5 V10.1 L0 9.4Z M6 6 H12 V11 L6 10.2Z" fill="#f0f0f0"/></svg>
<svg class="a" style="left:874px;top:31px" width="13" height="12" viewBox="0 0 13 12"><circle cx="8" cy="4.5" r="3.6" fill="none" stroke="#e8e8e8" stroke-width="1.1"/><path d="M5.4 7.2 L1 11.5" stroke="#e8e8e8" stroke-width="1.3"/></svg>
<svg class="a" style="left:875px;top:56px" width="12" height="11" viewBox="0 0 12 11"><rect x="2" y="2" width="6" height="7" fill="none" stroke="#ddd" stroke-width="1"/><path d="M0 1 H1.5 M0 10 H1.5 M9 0.5 V2 M11 0.5 V2 M9 9 V10.5 M11 9 V10.5 M10 4 V7" stroke="#ddd" stroke-width="1"/></svg>
<svg class="a" style="left:872px;top:83px" width="15" height="15" viewBox="0 0 15 15"><path d="M13.5 9 H4.2 C4.4 11.5 6.3 12.8 8.6 12.8 C10.3 12.8 11.8 12.2 13 11.4 V13.8 C11.6 14.5 10 15 8 15 C4 15 1.3 12.3 1.3 8.2 C1.3 4 4.3 1 8 1 C11.4 1 13.8 3.4 13.8 7.4 Z M4.4 6.6 H10.7 C10.6 4.7 9.5 3.3 7.7 3.3 C6 3.3 4.7 4.6 4.4 6.6Z" fill="#1c6fd6"/></svg>
<svg class="a" style="left:873px;top:112px" width="15" height="16" viewBox="0 0 15 16"><path d="M4.5 4 V2.5 C4.5 1 5.5 0.5 7.5 0.5 C9.5 0.5 10.5 1 10.5 2.5 V4" fill="none" stroke="#eee" stroke-width="1"/><rect x="0.5" y="4" width="14" height="11.5" fill="#f4f4f4"/><rect x="4.5" y="6.5" width="2.8" height="2.8" fill="#f25022"/><rect x="7.7" y="6.5" width="2.8" height="2.8" fill="#7fba00"/><rect x="4.5" y="9.7" width="2.8" height="2.8" fill="#00a4ef"/><rect x="7.7" y="9.7" width="2.8" height="2.8" fill="#ffb900"/></svg>
<svg class="a" style="left:873px;top:142px" width="17" height="15" viewBox="0 0 17 15"><path d="M0 5 L8.5 0 L17 5 V15 H0Z" fill="#5ab0f0"/><path d="M0 5 L8.5 10 L17 5 V15 H0Z" fill="#1e88d8"/></svg>
<div class="a" style="left:862px;top:164px;width:38px;height:30px;background:#3a3a3a"></div>
<div class="a" style="left:898px;top:164px;width:2px;height:30px;background:#9ec4ee"></div>
<svg class="a" style="left:872px;top:169px" width="16" height="17" viewBox="0 0 16 17"><path d="M1 6 Q3 1 7 2 Q5 4 7 7 Q3 8 1 6Z" fill="#e89060"/><rect x="7" y="2" width="8" height="5" fill="#60c060"/><path d="M4 8 L15 8 L15 16 L4 16Z" fill="#f0e8e8"/><path d="M5 9 H7 V11 H5Z M9 9 H11 V11 H9Z M13 9 H15 V11 H13Z M7 11 H9 V13 H7Z M11 11 H13 V13 H11Z M5 13 H7 V15 H5Z M9 13 H11 V15 H9Z M13 13 H15 V15 H13Z" fill="#c04040"/></svg>
<div class="t" style="left:873px;top:310px;font-size:7px;color:#cfcfcf">ПК</div>
<svg class="a" style="left:877px;top:336px" width="10" height="10" viewBox="0 0 10 10"><circle cx="3.5" cy="5" r="1.6" fill="none" stroke="#ddd" stroke-width=".9"/><path d="M0.5 10 C0.5 7.5 6.5 7.5 6.5 10" fill="none" stroke="#ddd" stroke-width=".9"/><circle cx="7" cy="2.2" r="1.5" fill="none" stroke="#ddd" stroke-width=".9"/><path d="M5 5 C6 4 9 4 9.5 6.5" fill="none" stroke="#ddd" stroke-width=".9"/></svg>
<svg class="a" style="left:869px;top:356px" width="6" height="9" viewBox="0 0 6 9"><path d="M5 0.5 L1 4.5 L5 8.5" fill="none" stroke="#ddd" stroke-width="1"/></svg>
<svg class="a" style="left:880px;top:355px" width="13" height="10" viewBox="0 0 13 10"><path d="M6.5 0 L13 10 H0Z" fill="#d02020"/><path d="M9 4 L13 10 H6Z" fill="#30b030"/></svg>
<div class="a" style="left:869px;top:372px;width:8px;height:6px;background:#ddd;border-radius:1px"></div>
<svg class="a" style="left:881px;top:370px" width="12" height="12" viewBox="0 0 12 12"><rect x="1" y="1" width="10" height="7" fill="none" stroke="#ddd" stroke-width="1"/><path d="M6 8 V11 M3 11.5 H9" stroke="#ddd" stroke-width="1"/></svg>
<svg class="a" style="left:866px;top:385px" width="10" height="10" viewBox="0 0 10 10"><path d="M1 3.5 H3 L6 1 V9 L3 6.5 H1Z" fill="none" stroke="#ddd" stroke-width=".9"/><path d="M7.5 3.5 Q8.7 5 7.5 6.5" fill="none" stroke="#999" stroke-width=".8"/></svg>
<div class="t" style="left:872px;top:405px;font-size:7.2px;color:#e6e6e6">ENG</div>
<div class="t" style="left:872px;top:429px;font-size:7.2px;color:#e6e6e6">18:57</div>
<div class="t" style="left:861px;top:440px;font-size:7.2px;color:#e6e6e6;transform:scaleX(1.02)">28/06/2020</div>
<div class="a" style="left:876px;top:461px;width:12px;height:11px;background:#e8e8e8;clip-path:polygon(0 0,100% 0,100% 75%,40% 75%,20% 100%,20% 75%,0 75%)"></div>
<div class="a" style="left:883px;top:467px;width:7px;height:7px;border-radius:50%;background:#222;border:1px solid #ccc"></div>
<div class="a" style="left:862px;top:481px;width:38px;height:1px;background:#444"></div>
</div></body></html>
